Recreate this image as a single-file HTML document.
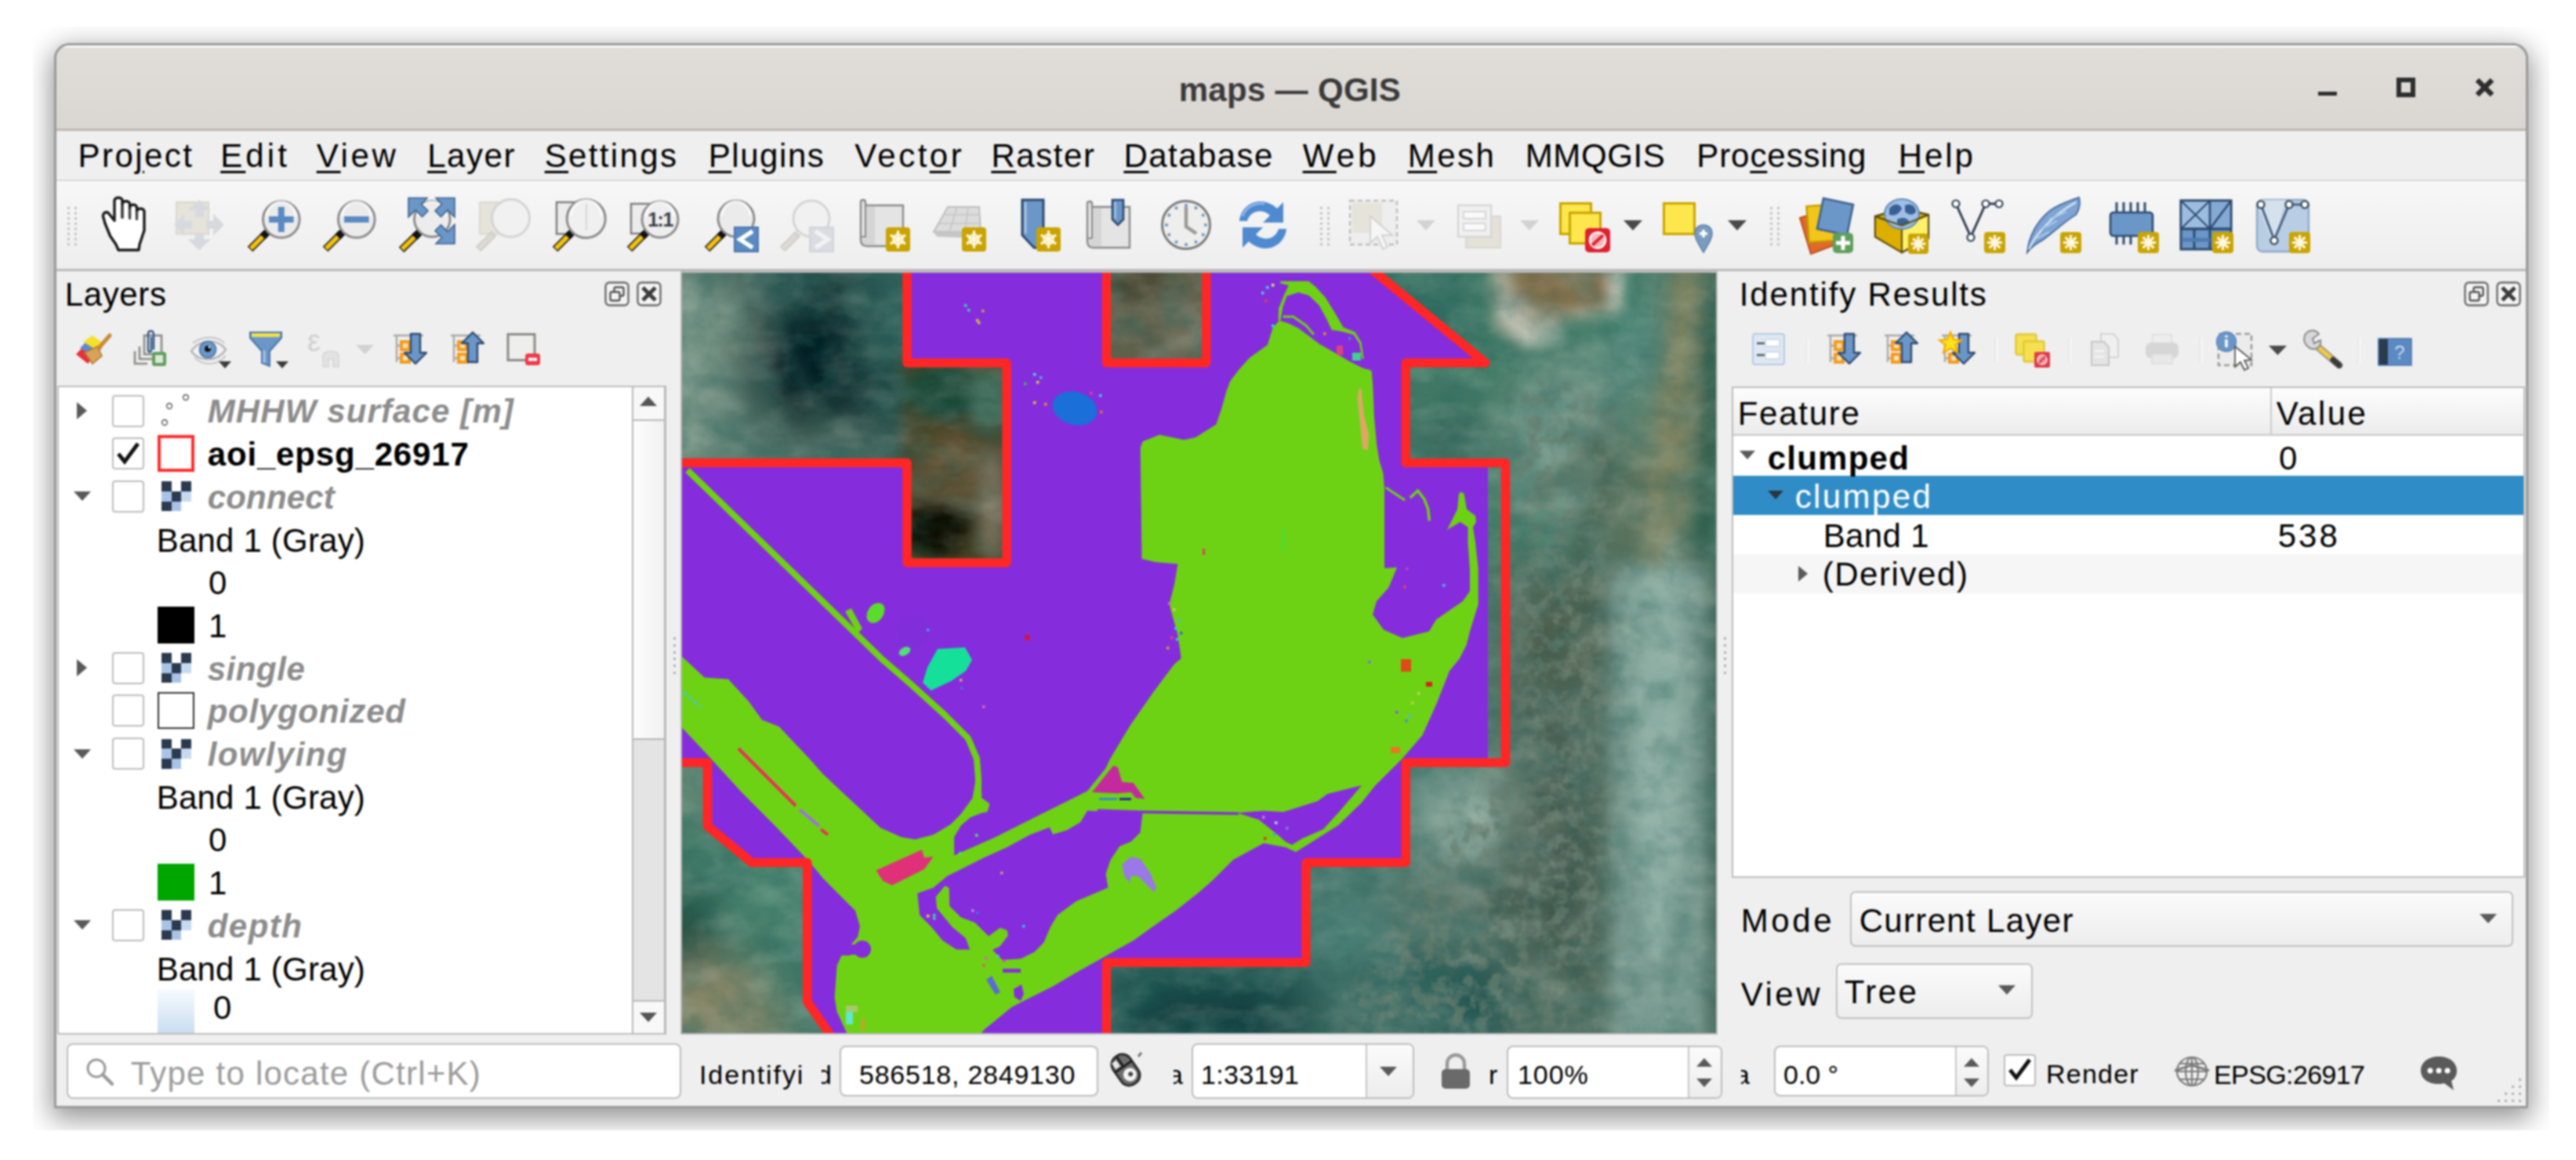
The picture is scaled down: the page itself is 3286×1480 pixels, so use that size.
<!DOCTYPE html>
<html><head><meta charset="utf-8"><title>maps — QGIS</title>
<style>
html,body{margin:0;padding:0;background:#fff;}
body{width:3286px;height:1480px;position:relative;overflow:hidden;font-family:"Liberation Sans",sans-serif;color:#000;}
.a{position:absolute;box-sizing:border-box;}
.t{position:absolute;white-space:pre;line-height:1;}
.t u{text-decoration:underline;text-decoration-thickness:3px;text-underline-offset:5px;}
#clip{position:absolute;left:42px;top:34px;width:3210px;height:1408px;overflow:hidden;background:#fff;}
#shadow{position:absolute;left:27px;top:21px;width:3156px;height:1359px;border-radius:20px 20px 2px 2px;box-shadow:0 10px 34px 4px rgba(0,0,0,.42);background:#999;}
#win{position:absolute;left:69px;top:55px;width:3156px;height:1359px;border-radius:20px 20px 2px 2px;background:#9a9a9a;}
#inner{position:absolute;left:72px;top:58px;width:3150px;height:1353px;border-radius:17px 17px 0 0;background:#efefef;overflow:hidden;}
svg{position:absolute;overflow:visible;}
</style></head><body>
<div id="all" style="position:absolute;left:0;top:0;width:3286px;height:1480px;filter:blur(1px);">
<div id="clip"><div id="shadow"></div></div>
<div id="win"></div>
<div id="inner"></div>

<!-- chrome -->
<div class="a" style="left:72px;top:58px;width:3150px;height:108px;border-radius:17px 17px 0 0;background:linear-gradient(#fff 0,#fff 2px,#e1ddd9 3px,#dad7d3 100%);"></div>
<div class="a" style="left:72px;top:164px;width:3150px;height:3px;background:#beb7b0;"></div>
<span class="t" style="left:1503.7px;top:93.9px;font-size:42px;letter-spacing:0.31px;font-weight:bold;color:#3a3a3a;">maps — QGIS</span>
<div class="a" style="left:2957px;top:117px;width:24px;height:5px;background:#2e2e2e;"></div>
<div class="a" style="left:3057px;top:99px;width:24px;height:25px;border:6px solid #2e2e2e;"></div>
<svg style="left:3157px;top:99px" width="25" height="25" viewBox="0 0 25 25"><path d="M3 3L22 22M22 3L3 22" stroke="#2e2e2e" stroke-width="6.5"/></svg>
<div class="a" style="left:72px;top:167px;width:3150px;height:63px;background:#efefef;"></div>
<div class="a" style="left:72px;top:229px;width:3150px;height:2.5px;background:#d6d6d6;"></div>
<span class="t" style="left:99.5px;top:177.9px;font-size:42px;letter-spacing:2.45px;">Pro<u>j</u>ect</span>
<span class="t" style="left:281.2px;top:177.9px;font-size:42px;letter-spacing:4.11px;"><u>E</u>dit</span>
<span class="t" style="left:403.7px;top:177.9px;font-size:42px;letter-spacing:3.64px;"><u>V</u>iew</span>
<span class="t" style="left:545.2px;top:177.9px;font-size:42px;letter-spacing:1.53px;"><u>L</u>ayer</span>
<span class="t" style="left:694.7px;top:177.9px;font-size:42px;letter-spacing:2.35px;"><u>S</u>ettings</span>
<span class="t" style="left:903.7px;top:177.9px;font-size:42px;letter-spacing:1.57px;"><u>P</u>lugins</span>
<span class="t" style="left:1090.2px;top:177.9px;font-size:42px;letter-spacing:3.47px;">Vect<u>o</u>r</span>
<span class="t" style="left:1264.4px;top:177.9px;font-size:42px;letter-spacing:1.56px;"><u>R</u>aster</span>
<span class="t" style="left:1433.4px;top:177.9px;font-size:42px;letter-spacing:1.46px;"><u>D</u>atabase</span>
<span class="t" style="left:1661.7px;top:177.9px;font-size:42px;letter-spacing:4.15px;"><u>W</u>eb</span>
<span class="t" style="left:1795.7px;top:177.9px;font-size:42px;letter-spacing:2.50px;"><u>M</u>esh</span>
<span class="t" style="left:1945.7px;top:177.9px;font-size:42px;letter-spacing:0.64px;">MMQGIS</span>
<span class="t" style="left:2164.2px;top:177.9px;font-size:42px;letter-spacing:0.94px;">Pro<u>c</u>essing</span>
<span class="t" style="left:2421.7px;top:177.9px;font-size:42px;letter-spacing:2.94px;"><u>H</u>elp</span>
<div class="a" style="left:72px;top:231px;width:3150px;height:114px;background:linear-gradient(#f7f7f7,#eeeeee);"></div>
<div class="a" style="left:72px;top:343px;width:3150px;height:3px;background:#bababa;"></div>
<!-- toolbar -->
<svg style="left:86px;top:264px" width="14" height="56"><rect x="0" y="0.0" width="3" height="3" fill="#c2c2c2"/><rect x="9" y="0.0" width="3" height="3" fill="#c2c2c2"/><rect x="0" y="6.6" width="3" height="3" fill="#c2c2c2"/><rect x="9" y="6.6" width="3" height="3" fill="#c2c2c2"/><rect x="0" y="13.2" width="3" height="3" fill="#c2c2c2"/><rect x="9" y="13.2" width="3" height="3" fill="#c2c2c2"/><rect x="0" y="19.8" width="3" height="3" fill="#c2c2c2"/><rect x="9" y="19.8" width="3" height="3" fill="#c2c2c2"/><rect x="0" y="26.4" width="3" height="3" fill="#c2c2c2"/><rect x="9" y="26.4" width="3" height="3" fill="#c2c2c2"/><rect x="0" y="33.0" width="3" height="3" fill="#c2c2c2"/><rect x="9" y="33.0" width="3" height="3" fill="#c2c2c2"/><rect x="0" y="39.6" width="3" height="3" fill="#c2c2c2"/><rect x="9" y="39.6" width="3" height="3" fill="#c2c2c2"/><rect x="0" y="46.2" width="3" height="3" fill="#c2c2c2"/><rect x="9" y="46.2" width="3" height="3" fill="#c2c2c2"/></svg>
<svg style="left:122.0px;top:252px" width="72" height="72" viewBox="0 0 72 72"><path d="M29 67L26 60L18.5 49L12 33L9.5 24C9 20 13 17.5 16 19.5L24 29.5V4C24 -1 34 -1 34 4V25V8.5C34 3.5 43.5 3.5 43.5 8.5V25V13C43.5 8 52.5 8 52.5 13V26V18C52.5 13 62 13 62 18V42L56 60L55 67Z" fill="#fff" stroke="#1a1a1a" stroke-width="3.4" stroke-linejoin="round"/><path d="M34 10V27M43.5 14V28M52.5 18V29" stroke="#444" stroke-width="3"/></svg>
<svg style="left:217.0px;top:252px" width="72" height="72" viewBox="0 0 72 72"><rect x="8" y="6" width="41" height="40.5" fill="#e6e3da" stroke="#d9d6cd" stroke-width="2"/><g fill="#d6dade"><path d="M37 3L52 16H43V25H31.5V16H22.5Z"/><path d="M69 34.7L55 20.7V29.7H46V39.8H55V48.8Z"/><path d="M37 67.5L22.5 53.3H31.5V46.6H43V53.3H52Z"/><path d="M5 34.7L18 20.7V29.7H28V39.8H18V48.8Z"/></g></svg>
<svg style="left:313.5px;top:252px" width="72" height="72" viewBox="0 0 72 72"><path d="M25 46L5 66" stroke="#3a3320" stroke-width="9.5" stroke-linecap="butt"/><path d="M23 48L6 65" stroke="#f4c20d" stroke-width="5.5"/><path d="M28 43L21 50" stroke="#111" stroke-width="9.5"/><circle cx="44.8" cy="28" r="23.3" fill="#ebebeb" stroke="#8c8c8c" stroke-width="3"/><path d="M26.499999999999996 24A18.3 18.3 0 0 1 63.099999999999994 24" fill="none" stroke="#fff" stroke-width="3" opacity=".8"/><path d="M29 28H60.6M44.8 12V44" stroke="#5b8ac2" stroke-width="8"/></svg>
<svg style="left:410.0px;top:252px" width="72" height="72" viewBox="0 0 72 72"><path d="M25 46L5 66" stroke="#3a3320" stroke-width="9.5" stroke-linecap="butt"/><path d="M23 48L6 65" stroke="#f4c20d" stroke-width="5.5"/><path d="M28 43L21 50" stroke="#111" stroke-width="9.5"/><circle cx="44.8" cy="28" r="23.3" fill="#ebebeb" stroke="#8c8c8c" stroke-width="3"/><path d="M26.499999999999996 24A18.3 18.3 0 0 1 63.099999999999994 24" fill="none" stroke="#fff" stroke-width="3" opacity=".8"/><path d="M29 28H60.6" stroke="#5b8ac2" stroke-width="8"/></svg>
<svg style="left:508.0px;top:252px" width="72" height="72" viewBox="0 0 72 72"><path d="M24.7 46.6L4 66.8" stroke="#3a3320" stroke-width="9.5" stroke-linecap="butt"/><path d="M22.7 48.6L5 65.8" stroke="#f4c20d" stroke-width="5.5"/><path d="M27.7 43.6L20.7 50.6" stroke="#111" stroke-width="9.5"/><circle cx="43.3" cy="27.4" r="22.8" fill="#ececec" stroke="#8c8c8c" stroke-width="3"/><path d="M25.499999999999996 23.4A17.8 17.8 0 0 1 61.099999999999994 23.4" fill="none" stroke="#fff" stroke-width="3" opacity=".8"/><g fill="#6b96c8" stroke="#3f628c" stroke-width="1.6"><path d="M13 0.5H37L29.5 8.5L38 17L30.5 24.5L22 16L13 25Z"/><path d="M72 0.5H48L55.5 8.5L47 17L54.5 24.5L63 16L72 25Z"/><path d="M72 59H48L55.5 51L47 42.5L54.5 35L63 43.5L72 34.5Z"/></g></svg>
<svg style="left:605.0px;top:252px" width="72" height="72" viewBox="0 0 72 72"><rect x="7" y="6" width="38" height="40.5" fill="#e6e3da" stroke="#dad7ce" stroke-width="2"/><path d="M25 46L5 66" stroke="#d0cec8" stroke-width="9.5" stroke-linecap="butt"/><path d="M23 48L6 65" stroke="#dcdad4" stroke-width="5.5"/><circle cx="46.5" cy="26.3" r="24" fill="#f1f1f1" stroke="#d4d4d4" stroke-width="3"/></svg>
<svg style="left:702.5px;top:252px" width="72" height="72" viewBox="0 0 72 72"><rect x="7" y="6" width="38" height="40.5" fill="#ececec" stroke="#7c7c7c" stroke-width="2.4"/><path d="M25 46L5 66" stroke="#3a3320" stroke-width="9.5" stroke-linecap="butt"/><path d="M23 48L6 65" stroke="#f4c20d" stroke-width="5.5"/><path d="M28 43L21 50" stroke="#111" stroke-width="9.5"/><circle cx="44.7" cy="27" r="24.5" fill="#f0f0f0" stroke="#8c8c8c" stroke-width="3"/><path d="M25.200000000000003 23A19.5 19.5 0 0 1 64.2 23" fill="none" stroke="#fff" stroke-width="3" opacity=".8"/><path d="M45 8V42" stroke="#d8d8d8" stroke-width="2"/></svg>
<svg style="left:798.0px;top:252px" width="72" height="72" viewBox="0 0 72 72"><rect x="7" y="8" width="38" height="38" fill="#ececec" stroke="#7c7c7c" stroke-width="2.4"/><path d="M25 46L5 66" stroke="#3a3320" stroke-width="9.5" stroke-linecap="butt"/><path d="M23 48L6 65" stroke="#f4c20d" stroke-width="5.5"/><path d="M28 43L21 50" stroke="#111" stroke-width="9.5"/><circle cx="44" cy="28" r="23" fill="#eeeeee" stroke="#8c8c8c" stroke-width="3"/><path d="M26 24A18 18 0 0 1 62 24" fill="none" stroke="#fff" stroke-width="3" opacity=".8"/><text x="44" y="37" font-family="Liberation Sans,sans-serif" font-weight="bold" font-size="25" text-anchor="middle" fill="#3a4148" letter-spacing="-1.5">1:1</text></svg>
<svg style="left:896.5px;top:252px" width="72" height="72" viewBox="0 0 72 72"><path d="M25 46L5 66" stroke="#3a3320" stroke-width="9.5" stroke-linecap="butt"/><path d="M23 48L6 65" stroke="#f4c20d" stroke-width="5.5"/><path d="M28 43L21 50" stroke="#111" stroke-width="9.5"/><circle cx="42" cy="27" r="23" fill="#ebebeb" stroke="#8c8c8c" stroke-width="3"/><path d="M24 23A18 18 0 0 1 60 23" fill="none" stroke="#fff" stroke-width="3" opacity=".8"/><rect x="40" y="38" width="30" height="31" fill="#5b8ac2" stroke="#4a76aa" stroke-width="2"/><path d="M63 43L47 53.5L63 64" stroke="#fff" stroke-width="5.5" fill="none"/></svg>
<svg style="left:993.0px;top:252px" width="72" height="72" viewBox="0 0 72 72"><path d="M25 46L5 66" stroke="#d0cec8" stroke-width="9.5" stroke-linecap="butt"/><path d="M23 48L6 65" stroke="#dcdad4" stroke-width="5.5"/><circle cx="42" cy="27" r="23" fill="#f1f1f1" stroke="#d4d4d4" stroke-width="3"/><rect x="40" y="38" width="30" height="31" fill="#d9dde1" stroke="#d0d4d8" stroke-width="2"/><path d="M47 43L63 53.5L47 64" stroke="#f2f2f2" stroke-width="5.5" fill="none"/></svg>
<svg style="left:1092.0px;top:252px" width="72" height="72" viewBox="0 0 72 72"><path d="M6 6C6 2 12 2 12 6V10H60V62H14C8 62 6 58 6 54Z" fill="#e4e4e4" stroke="#8a8a8a" stroke-width="2.4"/><path d="M12 10V50H6" fill="none" stroke="#8a8a8a" stroke-width="2"/><path d="M13 11H24V61H14C9 61 8 57 8 52H13Z" fill="#cfcfcf" opacity=".7"/><rect x="38" y="38" width="31" height="31" rx="4" fill="#c9a400"/><path d="M53.5 53.5L53.5 64.7M53.5 53.5L43.8 59.1M53.5 53.5L43.8 47.9M53.5 53.5L53.5 42.3M53.5 53.5L63.2 47.9M53.5 53.5L63.2 59.1" stroke="#fff8e0" stroke-width="3.2" fill="none"/><circle cx="53.5" cy="53.5" r="6.2" fill="none" stroke="#fff8e0" stroke-width="2.4"/></svg>
<svg style="left:1188.5px;top:252px" width="72" height="72" viewBox="0 0 72 72"><path d="M20 12L60 12L62 44L2 44Z" fill="#dcdcdc" stroke="#bdbdbd" stroke-width="2"/><path d="M14 22H61M8 33H62M32 12L22 44M46 12L42 44" stroke="#c4c4c4" stroke-width="1.6"/><path d="M2 44L62 44L58 52L6 50Z" fill="#c6c6c6"/><rect x="38" y="38" width="31" height="31" rx="4" fill="#c9a400"/><path d="M53.5 53.5L53.5 64.7M53.5 53.5L43.8 59.1M53.5 53.5L43.8 47.9M53.5 53.5L53.5 42.3M53.5 53.5L63.2 47.9M53.5 53.5L63.2 59.1" stroke="#fff8e0" stroke-width="3.2" fill="none"/><circle cx="53.5" cy="53.5" r="6.2" fill="none" stroke="#fff8e0" stroke-width="2.4"/></svg>
<svg style="left:1293.0px;top:252px" width="72" height="72" viewBox="0 0 72 72"><path d="M11 3H38V64H26L11 48Z" fill="#6b96c8" stroke="#2d4a6e" stroke-width="3"/><path d="M15 6V46" stroke="#a9c6e6" stroke-width="3"/><rect x="29" y="38" width="31" height="31" rx="4" fill="#c9a400"/><path d="M44.5 53.5L44.5 64.7M44.5 53.5L34.8 59.1M44.5 53.5L34.8 47.9M44.5 53.5L44.5 42.3M44.5 53.5L54.2 47.9M44.5 53.5L54.2 59.1" stroke="#fff8e0" stroke-width="3.2" fill="none"/><circle cx="44.5" cy="53.5" r="6.2" fill="none" stroke="#fff8e0" stroke-width="2.4"/></svg>
<svg style="left:1381.0px;top:252px" width="72" height="72" viewBox="0 0 72 72"><g transform="translate(0,2)"><path d="M6 6C6 2 12 2 12 6V10H60V62H14C8 62 6 58 6 54Z" fill="#e4e4e4" stroke="#8a8a8a" stroke-width="2.4"/><path d="M12 10V50H6" fill="none" stroke="#8a8a8a" stroke-width="2"/><path d="M13 11H24V61H14C9 61 8 57 8 52H13Z" fill="#cfcfcf" opacity=".7"/></g><path d="M38 3H52V28L45 35L38 28Z" fill="#6b96c8" stroke="#2d4a6e" stroke-width="2.6"/><path d="M41.5 6V27" stroke="#a9c6e6" stroke-width="2.4"/></svg>
<svg style="left:1477.0px;top:252px" width="72" height="72" viewBox="0 0 72 72"><circle cx="36" cy="35" r="30.5" fill="#eeeeec" stroke="#7a7a7a" stroke-width="3"/><rect x="59.2" y="33.2" width="3.6" height="3.6" fill="#6b96c8"/><rect x="55.9" y="45.7" width="3.6" height="3.6" fill="#6b96c8"/><rect x="46.7" y="54.9" width="3.6" height="3.6" fill="#6b96c8"/><rect x="34.2" y="58.2" width="3.6" height="3.6" fill="#6b96c8"/><rect x="21.7" y="54.9" width="3.6" height="3.6" fill="#6b96c8"/><rect x="12.5" y="45.7" width="3.6" height="3.6" fill="#6b96c8"/><rect x="9.2" y="33.2" width="3.6" height="3.6" fill="#6b96c8"/><rect x="12.5" y="20.7" width="3.6" height="3.6" fill="#6b96c8"/><rect x="21.7" y="11.5" width="3.6" height="3.6" fill="#6b96c8"/><rect x="34.2" y="8.2" width="3.6" height="3.6" fill="#6b96c8"/><rect x="46.7" y="11.5" width="3.6" height="3.6" fill="#6b96c8"/><rect x="55.9" y="20.7" width="3.6" height="3.6" fill="#6b96c8"/><path d="M36 12V37L49 46" stroke="#9a9a9a" stroke-width="4.5" fill="none"/></svg>
<svg style="left:1574.5px;top:252px" width="72" height="72" viewBox="0 0 72 72"><g fill="#4f8ad0"><path d="M6 30C8 12 24 2 40 6C46 8 50 10 54 14L62 6V32H36L45 23C36 14 20 16 16 30Z"/><path d="M66 40C64 58 48 68 32 64C26 62 22 60 18 56L10 64V38H36L27 47C36 56 52 54 56 40Z"/></g><path d="M10 24C14 12 26 6 38 8" stroke="#8fb6e6" stroke-width="3" fill="none"/></svg>
<svg style="left:1684px;top:264px" width="14" height="56"><rect x="0" y="0.0" width="3" height="3" fill="#c2c2c2"/><rect x="9" y="0.0" width="3" height="3" fill="#c2c2c2"/><rect x="0" y="6.6" width="3" height="3" fill="#c2c2c2"/><rect x="9" y="6.6" width="3" height="3" fill="#c2c2c2"/><rect x="0" y="13.2" width="3" height="3" fill="#c2c2c2"/><rect x="9" y="13.2" width="3" height="3" fill="#c2c2c2"/><rect x="0" y="19.8" width="3" height="3" fill="#c2c2c2"/><rect x="9" y="19.8" width="3" height="3" fill="#c2c2c2"/><rect x="0" y="26.4" width="3" height="3" fill="#c2c2c2"/><rect x="9" y="26.4" width="3" height="3" fill="#c2c2c2"/><rect x="0" y="33.0" width="3" height="3" fill="#c2c2c2"/><rect x="9" y="33.0" width="3" height="3" fill="#c2c2c2"/><rect x="0" y="39.6" width="3" height="3" fill="#c2c2c2"/><rect x="9" y="39.6" width="3" height="3" fill="#c2c2c2"/><rect x="0" y="46.2" width="3" height="3" fill="#c2c2c2"/><rect x="9" y="46.2" width="3" height="3" fill="#c2c2c2"/></svg>
<svg style="left:1718.0px;top:252px" width="72" height="72" viewBox="0 0 72 72"><rect x="4" y="4" width="60" height="56" fill="#eeeeee" stroke="#bdbdbd" stroke-width="2.4" stroke-dasharray="6 4"/><rect x="7" y="7" width="38" height="38" fill="#e6e3da"/><path d="M30 24L30 58L39 50L46 66L52 63L45 48L58 48Z" fill="#f6f6f6" stroke="#d2d2d2" stroke-width="2"/></svg>
<svg style="left:1807px;top:281px" width="24" height="13" viewBox="0 0 24 13"><path d="M0 0H24L12 13Z" fill="#d2d2d2"/></svg>
<svg style="left:1851.0px;top:252px" width="72" height="72" viewBox="0 0 72 72"><rect x="19" y="24" width="44" height="40" fill="#e3e1d8" stroke="#d8d6ce" stroke-width="2"/><rect x="9" y="10" width="42" height="40" fill="#f0f0f0" stroke="#d6d6d6" stroke-width="2.4"/><rect x="16" y="18" width="28" height="9" fill="#fafafa" stroke="#d6d6d6" stroke-width="2"/><rect x="16" y="33" width="28" height="9" fill="#fafafa" stroke="#d6d6d6" stroke-width="2"/></svg>
<svg style="left:1938.5px;top:281px" width="24" height="13" viewBox="0 0 24 13"><path d="M0 0H24L12 13Z" fill="#d2d2d2"/></svg>
<svg style="left:1985.5px;top:252px" width="72" height="72" viewBox="0 0 72 72"><rect x="4.5" y="7.5" width="39" height="39" fill="#fde74c" stroke="#c9a400" stroke-width="3"/><rect x="16.5" y="19.5" width="39" height="39" fill="#fde74c" stroke="#c9a400" stroke-width="3"/><rect x="36" y="39" width="32" height="31" rx="5" fill="#e02030"/><circle cx="52" cy="54.5" r="10" fill="#f6b8b8" stroke="#fff" stroke-width="2.4"/><path d="M45 61L59 48" stroke="#e02030" stroke-width="4"/></svg>
<svg style="left:2071px;top:281px" width="24" height="13" viewBox="0 0 24 13"><path d="M0 0H24L12 13Z" fill="#4a4a4a"/></svg>
<svg style="left:2116.0px;top:252px" width="72" height="72" viewBox="0 0 72 72"><rect x="6.5" y="7.5" width="39" height="39" fill="#fde74c" stroke="#c9a400" stroke-width="3"/><path d="M57 70C50 58 46 52 46 46C46 39 51 35 57 35C63 35 68 39 68 46C68 52 64 58 57 70Z" fill="#7a9cc0" stroke="#5f82a6" stroke-width="1.6"/><path d="M52 46H62M57 41V51" stroke="#fff" stroke-width="3.4"/></svg>
<svg style="left:2203.5px;top:281px" width="24" height="13" viewBox="0 0 24 13"><path d="M0 0H24L12 13Z" fill="#4a4a4a"/></svg>
<svg style="left:2258px;top:264px" width="14" height="56"><rect x="0" y="0.0" width="3" height="3" fill="#c2c2c2"/><rect x="9" y="0.0" width="3" height="3" fill="#c2c2c2"/><rect x="0" y="6.6" width="3" height="3" fill="#c2c2c2"/><rect x="9" y="6.6" width="3" height="3" fill="#c2c2c2"/><rect x="0" y="13.2" width="3" height="3" fill="#c2c2c2"/><rect x="9" y="13.2" width="3" height="3" fill="#c2c2c2"/><rect x="0" y="19.8" width="3" height="3" fill="#c2c2c2"/><rect x="9" y="19.8" width="3" height="3" fill="#c2c2c2"/><rect x="0" y="26.4" width="3" height="3" fill="#c2c2c2"/><rect x="9" y="26.4" width="3" height="3" fill="#c2c2c2"/><rect x="0" y="33.0" width="3" height="3" fill="#c2c2c2"/><rect x="9" y="33.0" width="3" height="3" fill="#c2c2c2"/><rect x="0" y="39.6" width="3" height="3" fill="#c2c2c2"/><rect x="9" y="39.6" width="3" height="3" fill="#c2c2c2"/><rect x="0" y="46.2" width="3" height="3" fill="#c2c2c2"/><rect x="9" y="46.2" width="3" height="3" fill="#c2c2c2"/></svg>
<svg style="left:2293.5px;top:252px" width="72" height="72" viewBox="0 0 72 72"><path d="M2 26L34 16L48 60L16 72Z" fill="#e0692a" stroke="#b8501c" stroke-width="2"/><path d="M12 10H46V56H12Z" fill="#f2c618" stroke="#c49a00" stroke-width="2.4" transform="rotate(-4 29 33)"/><path d="M32 1L70 9L62 48L24 40Z" fill="#6b96c8" stroke="#3f628c" stroke-width="2.6"/><rect x="44" y="45" width="26" height="26" rx="5" fill="#5f9e5c"/><path d="M48 58H66M57 49V67" stroke="#fff" stroke-width="5"/></svg>
<svg style="left:2390.0px;top:252px" width="72" height="72" viewBox="0 0 72 72"><path d="M2 24L36 14L70 22V52L36 70L2 50Z" fill="#d9b000" stroke="#5a4a10" stroke-width="2.4"/><path d="M36 36L70 22V52L36 70Z" fill="#fdf16a" stroke="#5a4a10" stroke-width="2"/><path d="M2 24L36 36V70L2 50Z" fill="#dcae00" stroke="#5a4a10" stroke-width="2"/><ellipse cx="36" cy="21" rx="22" ry="19" fill="#9fc0e6" stroke="#5f86b4" stroke-width="2"/><path d="M20 14C26 6 34 8 36 14C32 22 26 24 20 22ZM40 10C48 6 54 12 54 18C50 24 44 22 40 18ZM30 28C36 24 44 26 46 32C40 36 34 36 30 32Z" fill="#3a5f94"/><path d="M2 24L36 36L70 22" fill="none" stroke="#5a4a10" stroke-width="2"/><rect x="44" y="46" width="26" height="26" rx="4" fill="#c9a400"/><path d="M57.0 59.0L66.4 59.0M57.0 59.0L63.6 65.6M57.0 59.0L57.0 68.4M57.0 59.0L50.4 65.6M57.0 59.0L47.6 59.0M57.0 59.0L50.4 52.4M57.0 59.0L57.0 49.6M57.0 59.0L63.6 52.4" stroke="#fff8e0" stroke-width="3.2" fill="none"/></svg>
<svg style="left:2487.0px;top:252px" width="72" height="72" viewBox="0 0 72 72"><path d="M8 8L27 50L46 8L62 8" fill="none" stroke="#2f3f50" stroke-width="3"/><circle cx="8" cy="8" r="4.5" fill="#fff" stroke="#2f3f50" stroke-width="2.2"/><circle cx="27" cy="51" r="4.5" fill="#fff" stroke="#2f3f50" stroke-width="2.2"/><circle cx="46" cy="8" r="4.5" fill="#fff" stroke="#2f3f50" stroke-width="2.2"/><circle cx="63" cy="8" r="4.5" fill="#fff" stroke="#2f3f50" stroke-width="2.2"/><rect x="44" y="44" width="27" height="27" rx="4" fill="#c9a400"/><path d="M57.5 57.5L67.2 57.5M57.5 57.5L64.4 64.4M57.5 57.5L57.5 67.2M57.5 57.5L50.6 64.4M57.5 57.5L47.8 57.5M57.5 57.5L50.6 50.6M57.5 57.5L57.5 47.8M57.5 57.5L64.4 50.6" stroke="#fff8e0" stroke-width="3.2" fill="none"/></svg>
<svg style="left:2584.0px;top:252px" width="72" height="72" viewBox="0 0 72 72"><path d="M2 70C4 50 14 30 32 16C44 8 56 4 68 0C70 8 68 16 64 22C50 30 36 44 22 54C14 58 8 62 2 70Z" fill="#7fa4d4" stroke="#4a6f9e" stroke-width="2"/><path d="M4 66C14 44 36 22 64 6" stroke="#d8e6f6" stroke-width="2.4" fill="none"/><path d="M20 40L40 30M30 28L52 18M14 52L30 44" stroke="#a9c6e6" stroke-width="2.4"/><rect x="44" y="44" width="27" height="27" rx="4" fill="#c9a400"/><path d="M57.5 57.5L67.2 57.5M57.5 57.5L64.4 64.4M57.5 57.5L57.5 67.2M57.5 57.5L50.6 64.4M57.5 57.5L47.8 57.5M57.5 57.5L50.6 50.6M57.5 57.5L57.5 47.8M57.5 57.5L64.4 50.6" stroke="#fff8e0" stroke-width="3.2" fill="none"/></svg>
<svg style="left:2685.5px;top:252px" width="72" height="72" viewBox="0 0 72 72"><path d="M14 6V20" stroke="#2d4a6e" stroke-width="3"/><path d="M23 6V20" stroke="#2d4a6e" stroke-width="3"/><path d="M32 6V20" stroke="#2d4a6e" stroke-width="3"/><path d="M41 6V20" stroke="#2d4a6e" stroke-width="3"/><path d="M50 6V20" stroke="#2d4a6e" stroke-width="3"/><path d="M14 46V60" stroke="#2d4a6e" stroke-width="3"/><path d="M23 46V60" stroke="#2d4a6e" stroke-width="3"/><path d="M32 46V60" stroke="#2d4a6e" stroke-width="3"/><rect x="6" y="19" width="54" height="30" rx="4" fill="#6b96c8" stroke="#2d4a6e" stroke-width="2.6"/><rect x="41" y="44" width="27" height="27" rx="4" fill="#c9a400"/><path d="M54.5 57.5L64.2 57.5M54.5 57.5L61.4 64.4M54.5 57.5L54.5 67.2M54.5 57.5L47.6 64.4M54.5 57.5L44.8 57.5M54.5 57.5L47.6 50.6M54.5 57.5L54.5 47.8M54.5 57.5L61.4 50.6" stroke="#fff8e0" stroke-width="3.2" fill="none"/></svg>
<svg style="left:2779.0px;top:252px" width="72" height="72" viewBox="0 0 72 72"><rect x="3" y="4" width="64" height="62" fill="#6b96c8" stroke="#2d4a6e" stroke-width="3"/><path d="M3 4H40V40H3Z" fill="#9dbde0" stroke="#2d4a6e" stroke-width="2.4"/><path d="M3 4L40 40M40 4L3 40" stroke="#2d4a6e" stroke-width="2"/><path d="M40 4H67V40H40ZM67 4L40 40" fill="#84a9d4" stroke="#2d4a6e" stroke-width="2.4"/><path d="M20 40V66M40 40V66M3 40H67" stroke="#2d4a6e" stroke-width="3"/><path d="M4 54H40" stroke="#4f7cb0" stroke-width="5"/><rect x="43" y="44" width="27" height="27" rx="4" fill="#c9a400"/><path d="M56.5 57.5L66.2 57.5M56.5 57.5L63.4 64.4M56.5 57.5L56.5 67.2M56.5 57.5L49.6 64.4M56.5 57.5L46.8 57.5M56.5 57.5L49.6 50.6M56.5 57.5L56.5 47.8M56.5 57.5L63.4 50.6" stroke="#fff8e0" stroke-width="3.2" fill="none"/></svg>
<svg style="left:2876.0px;top:252px" width="72" height="72" viewBox="0 0 72 72"><rect x="3" y="3" width="66" height="66" rx="7" fill="#b9cde4" stroke="#8fa9c8" stroke-width="2.4"/><path d="M3 10C3 6 6 3 10 3H40L24 60L6 14Z" fill="#dde6f0" opacity=".8"/><path d="M8 9L25 54L44 9L64 9" fill="none" stroke="#4a6482" stroke-width="3"/><circle cx="8" cy="9" r="4.5" fill="#fff" stroke="#2f3f50" stroke-width="2.2"/><circle cx="25" cy="55" r="4.5" fill="#fff" stroke="#2f3f50" stroke-width="2.2"/><circle cx="44" cy="9" r="4.5" fill="#fff" stroke="#2f3f50" stroke-width="2.2"/><circle cx="64" cy="9" r="4.5" fill="#fff" stroke="#2f3f50" stroke-width="2.2"/><rect x="44" y="44" width="27" height="27" rx="4" fill="#c9a400"/><path d="M57.5 57.5L67.2 57.5M57.5 57.5L64.4 64.4M57.5 57.5L57.5 67.2M57.5 57.5L50.6 64.4M57.5 57.5L47.8 57.5M57.5 57.5L50.6 50.6M57.5 57.5L57.5 47.8M57.5 57.5L64.4 50.6" stroke="#fff8e0" stroke-width="3.2" fill="none"/></svg>
<!-- smallbars -->
<svg style="left:96px;top:424px" width="48" height="44" viewBox="0 0 48 44"><path d="M1 28L20 8L34 20L16 40Z" fill="#e8303a"/><path d="M6 20L20 6L34 18L22 30Z" fill="#5b8ad0"/><path d="M10 12L22 4L36 14L26 22Z" fill="#f6e02a"/><path d="M12 26L28 18L34 30L22 40Z" fill="#d9a25a" stroke="#b07a30" stroke-width="1.6"/><path d="M30 20L44 4" stroke="#c98a3a" stroke-width="5" stroke-linecap="round"/></svg>
<svg style="left:170px;top:420px" width="46" height="50" viewBox="0 0 46 50"><path d="M2 28V44H18" fill="none" stroke="#8a8a86" stroke-width="2.6"/><path d="M8 22V38H24" fill="none" stroke="#8a8a86" stroke-width="2.6"/><rect x="14" y="8" width="22" height="24" fill="none" stroke="#8a8a86" stroke-width="2.6"/><path d="M26 26V6C26 1 19 1 19 6V26C19 30 23 30 23 26V10" fill="none" stroke="#3f5f8a" stroke-width="2.6"/><rect x="24" y="29" width="18" height="18" rx="3" fill="#5f9e5c"/><rect x="28" y="33" width="10" height="10" fill="#d8ead6"/></svg>
<svg style="left:242px;top:428px" width="54" height="44" viewBox="0 0 54 44"><path d="M2 20C12 6 34 2 46 18C36 34 12 34 2 20Z" fill="#f2f2f2" stroke="#b4b4b4" stroke-width="2.4"/><path d="M4 10C16 0 36 0 44 10" fill="none" stroke="#c4c4c4" stroke-width="2"/><path d="M6 28C18 40 36 38 46 26" fill="none" stroke="#c8c8c8" stroke-width="2"/><circle cx="23" cy="18" r="10.5" fill="#6b96c8" stroke="#4a76aa" stroke-width="1.6"/><circle cx="23" cy="17" r="4" fill="#111"/><circle cx="25" cy="15" r="1.4" fill="#fff"/></svg><svg style="left:279px;top:461px" width="16" height="9" viewBox="0 0 16 9"><path d="M0 0H16L8 9Z" fill="#3c3c3c"/></svg>
<svg style="left:318px;top:421px" width="50" height="50" viewBox="0 0 50 50"><path d="M1 3H41V10L26 27V46L16 42V27L1 10Z" fill="#6b96c8" stroke="#4a76aa" stroke-width="2"/><rect x="3" y="4" width="36" height="5" fill="#f0e04a"/><path d="M19 26V42" stroke="#a9c6e6" stroke-width="3"/></svg><svg style="left:352px;top:461px" width="16" height="9" viewBox="0 0 16 9"><path d="M0 0H16L8 9Z" fill="#3c3c3c"/></svg>
<svg style="left:392px;top:422px" width="46" height="50" viewBox="0 0 46 50"><text x="0" y="26" font-family="Liberation Sans,sans-serif" font-size="38" fill="#d0d0d0">ε</text><path d="M20 46V32C20 24 40 24 40 32V46H33V36H27V46Z" fill="#e2e2e2" stroke="#d6d6d6" stroke-width="1.6"/></svg>
<svg style="left:453.5px;top:440px" width="23" height="12" viewBox="0 0 23 12"><path d="M0 0H23L11.5 12Z" fill="#d2d2d2"/></svg>
<svg style="left:500px;top:424px" width="46" height="42" viewBox="0 0 46 42"><path d="M2 4H40" stroke="#a8a8a8" stroke-width="2.4"/><path d="M6 4V38M6 17H14M6 33H14" stroke="#a8a8a8" stroke-width="2.4" fill="none"/><rect x="12" y="12" width="10" height="10" fill="#ffe2b0" stroke="#f59a1c" stroke-width="4"/><rect x="12" y="28" width="10" height="10" fill="#ffe2b0" stroke="#f59a1c" stroke-width="4"/><path d="M30 40L44 26H36V2H24V26H16Z" fill="#6b96c8" stroke="#2d4a6e" stroke-width="2.4" stroke-linejoin="round"/></svg>
<svg style="left:573px;top:424px" width="46" height="42" viewBox="0 0 46 42"><path d="M2 4H40" stroke="#a8a8a8" stroke-width="2.4"/><path d="M6 4V38M6 17H14M6 33H14" stroke="#a8a8a8" stroke-width="2.4" fill="none"/><rect x="12" y="12" width="10" height="10" fill="#ffe2b0" stroke="#f59a1c" stroke-width="4"/><rect x="12" y="28" width="10" height="10" fill="#ffe2b0" stroke="#f59a1c" stroke-width="4"/><path d="M30 0L44 14H36V38H24V14H16Z" fill="#6b96c8" stroke="#2d4a6e" stroke-width="2.4" stroke-linejoin="round"/></svg>
<svg style="left:646px;top:424px" width="46" height="44" viewBox="0 0 46 44"><rect x="2" y="2.5" width="34" height="33" fill="#eeeeec" stroke="#8a8a86" stroke-width="3"/><rect x="24" y="27" width="19" height="15" rx="3.5" fill="#ee3a4a"/><path d="M28 34.5H39" stroke="#fff" stroke-width="4"/></svg>
<svg style="left:2235px;top:425px" width="42" height="41" viewBox="0 0 42 41"><rect x="1" y="1" width="40" height="39" rx="3" fill="#dfe8f2" stroke="#b3cbe6" stroke-width="2"/><path d="M6 13H16M6 28H16" stroke="#4a5868" stroke-width="2.6"/><rect x="17" y="8" width="18" height="9" rx="2" fill="#fff" stroke="#c3d3e6" stroke-width="1.4"/><rect x="17" y="24" width="18" height="9" rx="2" fill="#fff" stroke="#c3d3e6" stroke-width="1.4"/></svg>
<div class="a" style="left:2303.9px;top:431px;width:3px;height:32px;background:#fafafa;border-left:1px solid #dcdcdc;"></div>
<svg style="left:2329px;top:424px" width="46" height="42" viewBox="0 0 46 42"><path d="M2 4H40" stroke="#a8a8a8" stroke-width="2.4"/><path d="M6 4V38M6 17H14M6 33H14" stroke="#a8a8a8" stroke-width="2.4" fill="none"/><rect x="12" y="12" width="10" height="10" fill="#ffe2b0" stroke="#f59a1c" stroke-width="4"/><rect x="12" y="28" width="10" height="10" fill="#ffe2b0" stroke="#f59a1c" stroke-width="4"/><path d="M30 40L44 26H36V2H24V26H16Z" fill="#6b96c8" stroke="#2d4a6e" stroke-width="2.4" stroke-linejoin="round"/></svg>
<svg style="left:2402px;top:424px" width="46" height="42" viewBox="0 0 46 42"><path d="M2 4H40" stroke="#a8a8a8" stroke-width="2.4"/><path d="M6 4V38M6 17H14M6 33H14" stroke="#a8a8a8" stroke-width="2.4" fill="none"/><rect x="12" y="12" width="10" height="10" fill="#ffe2b0" stroke="#f59a1c" stroke-width="4"/><rect x="12" y="28" width="10" height="10" fill="#ffe2b0" stroke="#f59a1c" stroke-width="4"/><path d="M30 0L44 14H36V38H24V14H16Z" fill="#6b96c8" stroke="#2d4a6e" stroke-width="2.4" stroke-linejoin="round"/></svg>
<svg style="left:2475px;top:424px" width="46" height="42" viewBox="0 0 46 42"><path d="M2 4H40" stroke="#a8a8a8" stroke-width="2.4"/><path d="M6 4V38M6 17H14M6 33H14" stroke="#a8a8a8" stroke-width="2.4" fill="none"/><rect x="12" y="28" width="10" height="10" fill="#ffe2b0" stroke="#f59a1c" stroke-width="4"/><path d="M30 40L44 26H36V2H24V26H16Z" fill="#6b96c8" stroke="#2d4a6e" stroke-width="2.4" stroke-linejoin="round"/><path d="M13 0L17 9L27 10L19.5 16L22 26L13 20.5L4 26L6.5 16L-1 10L9 9Z" fill="#ffe21a" stroke="#f5a800" stroke-width="2.2"/></svg>
<div class="a" style="left:2544.8px;top:431px;width:3px;height:32px;background:#fafafa;border-left:1px solid #dcdcdc;"></div>
<svg style="left:2569px;top:424px" width="48" height="46" viewBox="0 0 48 46"><rect x="2.5" y="2.5" width="26" height="26" rx="2" fill="#f5e050" stroke="#e0c83a" stroke-width="2.4"/><rect x="12.5" y="11.5" width="26" height="26" rx="2" fill="#f5e050" stroke="#e0c83a" stroke-width="2.4"/><rect x="26" y="25" width="20" height="20" rx="2" fill="#e03a48"/><circle cx="36" cy="35" r="6" fill="#f0a0a6" stroke="#fbe0e0" stroke-width="1.6"/><path d="M32 39L40 31" stroke="#e03a48" stroke-width="2.6"/></svg>
<div class="a" style="left:2638.5px;top:431px;width:3px;height:32px;background:#fafafa;border-left:1px solid #dcdcdc;"></div>
<svg style="left:2666px;top:424px" width="38" height="44" viewBox="0 0 38 44"><path d="M14 2H30L36 9V32H14Z" fill="#efefef" stroke="#d4d4d4" stroke-width="2"/><path d="M2 12H18L24 19V42H2Z" fill="#e4e4e4" stroke="#c6c6c6" stroke-width="2"/><path d="M6 24H18M6 31H18" stroke="#f4f4f4" stroke-width="2.4"/></svg>
<svg style="left:2736px;top:426px" width="44" height="40" viewBox="0 0 44 40"><rect x="10" y="1" width="24" height="12" fill="#ededed" stroke="#dcdcdc" stroke-width="1.6"/><rect x="1" y="11" width="42" height="20" rx="7" fill="#d6d6d6"/><rect x="9" y="26" width="26" height="12" fill="#e8e8e8" stroke="#dcdcdc" stroke-width="1.6"/></svg>
<div class="a" style="left:2805.5px;top:431px;width:3px;height:32px;background:#fafafa;border-left:1px solid #dcdcdc;"></div>
<svg style="left:2827px;top:422px" width="50" height="50" viewBox="0 0 50 50"><rect x="3" y="4" width="42" height="40" fill="#ececec" stroke="#9a9a9a" stroke-width="2.6" stroke-dasharray="7 4"/><circle cx="13" cy="14" r="12.5" fill="#6b96c8" stroke="#5b86ba" stroke-width="1.4"/><path d="M13 11V21M13 6V8.5" stroke="#fff" stroke-width="3.4"/><path d="M24 20L24 46L31 40L36 50L41 47.5L36 38L45 37Z" fill="#fff" stroke="#555" stroke-width="1.8"/></svg>
<svg style="left:2894.0px;top:440.7px" width="23" height="12" viewBox="0 0 23 12"><path d="M0 0H23L11.5 12Z" fill="#4a4a4a"/></svg>
<svg style="left:2936px;top:420px" width="56" height="52" viewBox="0 0 56 52"><path d="M20 22L48 46" stroke="#8a8a8a" stroke-width="9" stroke-linecap="round"/><path d="M20 22L46 44" stroke="#eec84a" stroke-width="6" stroke-linecap="round"/><path d="M40 39L48 46" stroke="#3a3a3a" stroke-width="7" stroke-linecap="round"/><path d="M4 8C8 0 18 0 22 6L14 12L16 18L24 14C26 22 18 28 10 24C4 20 2 14 4 8Z" fill="#d8d8d8" stroke="#8a8a8a" stroke-width="2"/></svg>
<div class="a" style="left:3007.5px;top:431px;width:3px;height:32px;background:#fafafa;border-left:1px solid #dcdcdc;"></div>
<svg style="left:3034px;top:432px" width="42" height="34" viewBox="0 0 42 34"><rect x="0" y="0" width="42" height="34" fill="#5b8ac2"/><rect x="0" y="0" width="12" height="34" fill="#2b3a4e"/><path d="M0 0H42V34H0Z" fill="none" stroke="#4a76aa" stroke-width="1.6"/><text x="27" y="26" font-family="Liberation Sans,sans-serif" font-size="24" text-anchor="middle" fill="#c8daf0">?</text></svg>
<!-- layers -->
<span class="t" style="left:82.7px;top:354.6px;font-size:42px;letter-spacing:0.63px;">Layers</span>
<svg style="left:771px;top:358.5px" width="32" height="32" viewBox="0 0 32 32"><rect x="1.5" y="1.5" width="29" height="29" rx="5" fill="#f4f4f4" stroke="#6a6a6a" stroke-width="2.4"/><rect x="12.5" y="7.5" width="12" height="11" rx="2" fill="none" stroke="#555" stroke-width="2.4"/><rect x="7.5" y="13.5" width="12" height="11" rx="2" fill="#f4f4f4" stroke="#555" stroke-width="2.4"/></svg><svg style="left:812px;top:358.5px" width="32" height="32" viewBox="0 0 32 32"><rect x="1.5" y="1.5" width="29" height="29" rx="5" fill="#f4f4f4" stroke="#6a6a6a" stroke-width="2.4"/><path d="M8 8L24 24M24 8L8 24" stroke="#3c3c3c" stroke-width="5"/></svg>
<div class="a" style="left:73px;top:492px;width:777px;height:828px;background:#fff;border:2px solid #bcbcbc;"></div>
<div class="a" style="left:806px;top:494px;width:43px;height:824px;background:#e4e4e4;border-left:2px solid #b8b8b8;border-right:2px solid #b8b8b8;"></div>
<div class="a" style="left:808px;top:494px;width:39px;height:43px;background:#f8f8f8;border-bottom:2px solid #b8b8b8;"></div>
<div class="a" style="left:808px;top:537px;width:39px;height:407px;background:linear-gradient(90deg,#fdfdfd,#f1f1f1);border-bottom:2px solid #b4b4b4;"></div>
<div class="a" style="left:808px;top:1276px;width:39px;height:42px;background:#f8f8f8;border-top:2px solid #b8b8b8;"></div>
<div class="a" style="left:859px;top:813.0px;width:3px;height:3px;background:#b0b0b0;"></div>
<div class="a" style="left:2199px;top:813.0px;width:3px;height:3px;background:#b0b0b0;"></div>
<div class="a" style="left:859px;top:821.8px;width:3px;height:3px;background:#b0b0b0;"></div>
<div class="a" style="left:2199px;top:821.8px;width:3px;height:3px;background:#b0b0b0;"></div>
<div class="a" style="left:859px;top:830.6px;width:3px;height:3px;background:#b0b0b0;"></div>
<div class="a" style="left:2199px;top:830.6px;width:3px;height:3px;background:#b0b0b0;"></div>
<div class="a" style="left:859px;top:839.4px;width:3px;height:3px;background:#b0b0b0;"></div>
<div class="a" style="left:2199px;top:839.4px;width:3px;height:3px;background:#b0b0b0;"></div>
<div class="a" style="left:859px;top:848.2px;width:3px;height:3px;background:#b0b0b0;"></div>
<div class="a" style="left:2199px;top:848.2px;width:3px;height:3px;background:#b0b0b0;"></div>
<div class="a" style="left:859px;top:857.0px;width:3px;height:3px;background:#b0b0b0;"></div>
<div class="a" style="left:2199px;top:857.0px;width:3px;height:3px;background:#b0b0b0;"></div>
<svg style="left:816px;top:506px" width="22" height="12" viewBox="0 0 22 12"><path d="M0 12L11 0L22 12Z" fill="#555"/></svg>
<svg style="left:816px;top:1292px" width="22" height="12" viewBox="0 0 22 12"><path d="M0 0L11 12L22 0Z" fill="#555"/></svg>
<svg style="left:98px;top:513.0px" width="13" height="22" viewBox="0 0 13 22"><path d="M0 0L13 11L0 22Z" fill="#5a5a5a"/></svg><div class="a" style="left:143px;top:503.5px;width:41px;height:41px;background:#fff;border:2px solid #bdbdbd;border-radius:4px;"></div><svg style="left:201px;top:500.0px" width="48" height="48" viewBox="0 0 48 48"><g fill="#fff" stroke="#666" stroke-width="1.6"><circle cx="15" cy="18" r="3.4"/><circle cx="36" cy="7" r="3.4"/><circle cx="9" cy="39" r="3.4"/></g></svg><span class="t" style="left:264.7px;top:504.4px;font-size:42px;letter-spacing:1.12px;font-weight:bold;font-style:italic;color:#8c8c8c;">MHHW surface [m]</span>
<div class="a" style="left:143px;top:558.2px;width:41px;height:41px;background:#fff;border:2px solid #bdbdbd;border-radius:4px;"></div><svg style="left:147px;top:562.7px" width="34" height="32" viewBox="0 0 34 32"><path d="M4 16L12 26L29 3" stroke="#111" stroke-width="5" fill="none"/></svg><div class="a" style="left:201px;top:555.2px;width:47px;height:47px;border:4px solid #ff2a2a;background:#fff;"></div><span class="t" style="left:264.7px;top:559.1px;font-size:42px;letter-spacing:0.84px;font-weight:bold;">aoi_epsg_26917</span>
<svg style="left:94px;top:627.4px" width="22" height="12" viewBox="0 0 22 12"><path d="M0 0L22 0L11 12Z" fill="#5a5a5a"/></svg><div class="a" style="left:143px;top:612.9px;width:41px;height:41px;background:#fff;border:2px solid #bdbdbd;border-radius:4px;"></div><div class="a" style="left:206.0px;top:614.4px;width:12.7px;height:12.7px;background:#2b3a4e;"></div><div class="a" style="left:231.4px;top:614.4px;width:12.7px;height:12.7px;background:#2b3a4e;"></div><div class="a" style="left:206.0px;top:627.1px;width:12.7px;height:12.7px;background:#a9c3e6;"></div><div class="a" style="left:218.7px;top:627.1px;width:12.7px;height:12.7px;background:#2b3a4e;"></div><div class="a" style="left:231.4px;top:627.1px;width:12.7px;height:12.7px;background:#c7d9f0;"></div><div class="a" style="left:206.0px;top:639.8px;width:12.7px;height:12.7px;background:#2b3a4e;"></div><div class="a" style="left:218.7px;top:639.8px;width:12.7px;height:12.7px;background:#a9c3e6;"></div><span class="t" style="left:264.7px;top:613.8px;font-size:42px;letter-spacing:0.19px;font-weight:bold;font-style:italic;color:#8c8c8c;">connect</span>
<span class="t" style="left:199.7px;top:668.5px;font-size:42px;letter-spacing:0.20px;">Band 1 (Gray)</span>
<span class="t" style="left:266.0px;top:723.2px;font-size:42px;">0</span>
<span class="t" style="left:266.0px;top:777.9px;font-size:42px;">1</span><div class="a" style="left:201px;top:774.0px;width:47px;height:47px;background:#000;"></div>
<svg style="left:98px;top:841.2px" width="13" height="22" viewBox="0 0 13 22"><path d="M0 0L13 11L0 22Z" fill="#5a5a5a"/></svg><div class="a" style="left:143px;top:831.7px;width:41px;height:41px;background:#fff;border:2px solid #bdbdbd;border-radius:4px;"></div><div class="a" style="left:206.0px;top:833.2px;width:12.7px;height:12.7px;background:#2b3a4e;"></div><div class="a" style="left:231.4px;top:833.2px;width:12.7px;height:12.7px;background:#2b3a4e;"></div><div class="a" style="left:206.0px;top:845.9px;width:12.7px;height:12.7px;background:#a9c3e6;"></div><div class="a" style="left:218.7px;top:845.9px;width:12.7px;height:12.7px;background:#2b3a4e;"></div><div class="a" style="left:231.4px;top:845.9px;width:12.7px;height:12.7px;background:#c7d9f0;"></div><div class="a" style="left:206.0px;top:858.6px;width:12.7px;height:12.7px;background:#2b3a4e;"></div><div class="a" style="left:218.7px;top:858.6px;width:12.7px;height:12.7px;background:#a9c3e6;"></div><span class="t" style="left:264.7px;top:832.6px;font-size:42px;letter-spacing:0.57px;font-weight:bold;font-style:italic;color:#8c8c8c;">single</span>
<div class="a" style="left:143px;top:886.4px;width:41px;height:41px;background:#fff;border:2px solid #bdbdbd;border-radius:4px;"></div><div class="a" style="left:201px;top:883.4px;width:47px;height:47px;border:2px solid #333;background:#fff;"></div><span class="t" style="left:264.7px;top:887.3px;font-size:42px;letter-spacing:0.72px;font-weight:bold;font-style:italic;color:#8c8c8c;">polygonized</span>
<svg style="left:94px;top:955.6px" width="22" height="12" viewBox="0 0 22 12"><path d="M0 0L22 0L11 12Z" fill="#5a5a5a"/></svg><div class="a" style="left:143px;top:941.1px;width:41px;height:41px;background:#fff;border:2px solid #bdbdbd;border-radius:4px;"></div><div class="a" style="left:206.0px;top:942.6px;width:12.7px;height:12.7px;background:#2b3a4e;"></div><div class="a" style="left:231.4px;top:942.6px;width:12.7px;height:12.7px;background:#2b3a4e;"></div><div class="a" style="left:206.0px;top:955.3px;width:12.7px;height:12.7px;background:#a9c3e6;"></div><div class="a" style="left:218.7px;top:955.3px;width:12.7px;height:12.7px;background:#2b3a4e;"></div><div class="a" style="left:231.4px;top:955.3px;width:12.7px;height:12.7px;background:#c7d9f0;"></div><div class="a" style="left:206.0px;top:968.0px;width:12.7px;height:12.7px;background:#2b3a4e;"></div><div class="a" style="left:218.7px;top:968.0px;width:12.7px;height:12.7px;background:#a9c3e6;"></div><span class="t" style="left:264.7px;top:942.0px;font-size:42px;letter-spacing:1.39px;font-weight:bold;font-style:italic;color:#8c8c8c;">lowlying</span>
<span class="t" style="left:199.7px;top:996.7px;font-size:42px;letter-spacing:0.20px;">Band 1 (Gray)</span>
<span class="t" style="left:266.0px;top:1051.4px;font-size:42px;">0</span>
<span class="t" style="left:266.0px;top:1106.1px;font-size:42px;">1</span><div class="a" style="left:201px;top:1102.2px;width:47px;height:47px;background:#00a600;"></div>
<svg style="left:94px;top:1174.4px" width="22" height="12" viewBox="0 0 22 12"><path d="M0 0L22 0L11 12Z" fill="#5a5a5a"/></svg><div class="a" style="left:143px;top:1159.9px;width:41px;height:41px;background:#fff;border:2px solid #bdbdbd;border-radius:4px;"></div><div class="a" style="left:206.0px;top:1161.4px;width:12.7px;height:12.7px;background:#2b3a4e;"></div><div class="a" style="left:231.4px;top:1161.4px;width:12.7px;height:12.7px;background:#2b3a4e;"></div><div class="a" style="left:206.0px;top:1174.1px;width:12.7px;height:12.7px;background:#a9c3e6;"></div><div class="a" style="left:218.7px;top:1174.1px;width:12.7px;height:12.7px;background:#2b3a4e;"></div><div class="a" style="left:231.4px;top:1174.1px;width:12.7px;height:12.7px;background:#c7d9f0;"></div><div class="a" style="left:206.0px;top:1186.8px;width:12.7px;height:12.7px;background:#2b3a4e;"></div><div class="a" style="left:218.7px;top:1186.8px;width:12.7px;height:12.7px;background:#a9c3e6;"></div><span class="t" style="left:264.7px;top:1160.8px;font-size:42px;letter-spacing:1.47px;font-weight:bold;font-style:italic;color:#8c8c8c;">depth</span>
<span class="t" style="left:199.7px;top:1215.5px;font-size:42px;letter-spacing:0.20px;">Band 1 (Gray)</span>
<div class="a" style="left:201px;top:1262px;width:47px;height:56px;background:linear-gradient(#f7fbff,#c9ddf0);"></div>
<span class="t" style="left:272.0px;top:1265.3px;font-size:42px;">0</span>
<!-- mapsvg -->
<svg style="left:0;top:0" width="3286" height="1480" viewBox="0 0 3286 1480">
<defs>
<clipPath id="mapclip"><rect x="870" y="348.5" width="1319" height="969.5"/></clipPath>
<clipPath id="rasclip"><rect x="860" y="340" width="1038" height="990"/></clipPath>
<filter id="b40" x="-20%" y="-20%" width="140%" height="140%"><feGaussianBlur stdDeviation="28"/></filter>
<filter id="b12" x="-20%" y="-20%" width="140%" height="140%"><feGaussianBlur stdDeviation="9"/></filter>
<filter id="noise" x="0" y="0" width="100%" height="100%"><feTurbulence type="fractalNoise" baseFrequency="0.02 0.035" numOctaves="5" seed="7" result="n"/><feColorMatrix type="matrix" values="0 0 0 0 0.62  0 0 0 0 0.68  0 0 0 0 0.6  1.2 1.2 1.2 0 -1.55"/></filter>
<filter id="mott" x="-10%" y="-10%" width="120%" height="120%"><feGaussianBlur in="SourceAlpha" stdDeviation="18" result="m"/><feTurbulence type="fractalNoise" baseFrequency="0.06 0.06" numOctaves="3" seed="5"/><feColorMatrix type="matrix" values="0 0 0 0 0.13  0 0 0 0 0.2  0 0 0 0 0.15  2.4 2.4 2.4 0 -3.3" result="t"/><feComposite in="t" in2="m" operator="in"/></filter>
<filter id="noise2" x="0" y="0" width="100%" height="100%"><feTurbulence type="fractalNoise" baseFrequency="0.025 0.03" numOctaves="5" seed="23" result="n"/><feColorMatrix type="matrix" values="0 0 0 0 0.02  0 0 0 0 0.12  0 0 0 0 0.1  1.2 1.2 1.2 0 -1.6"/></filter>
</defs>
<rect x="868" y="346" width="1323" height="974" fill="#bababa"/>
<g clip-path="url(#mapclip)">
<rect x="860" y="340" width="1340" height="990" fill="#4a7a70"/>
<g filter="url(#b40)">
<rect x="840" y="320" width="330" height="290" fill="#1e4644"/>
<rect x="840" y="350" width="110" height="250" fill="#7c9888"/>
<ellipse cx="960" cy="520" rx="40" ry="80" fill="#4f766c"/>
<ellipse cx="1030" cy="440" rx="85" ry="115" fill="#061e20"/>
<ellipse cx="1000" cy="365" rx="60" ry="30" fill="#2c5a56"/>
<ellipse cx="1125" cy="400" rx="35" ry="80" fill="#2f5f5a"/>
<ellipse cx="1020" cy="575" rx="140" ry="22" fill="#587c70"/>
<rect x="1740" y="320" width="470" height="410" fill="#3f7a66"/>
<ellipse cx="1850" cy="560" rx="50" ry="40" fill="#3a665c"/>
<ellipse cx="2000" cy="560" rx="80" ry="120" fill="#6a9384"/>
<ellipse cx="2060" cy="640" rx="40" ry="90" fill="#566c56"/>
<ellipse cx="2138" cy="540" rx="22" ry="240" fill="#88896a" transform="rotate(5 2138 540)"/>
<ellipse cx="2180" cy="520" rx="12" ry="260" fill="#2a5c4c"/>
<ellipse cx="2100" cy="440" rx="40" ry="60" fill="#4c877a"/>
<ellipse cx="1830" cy="400" rx="50" ry="50" fill="#2f6a60"/>
<rect x="1900" y="720" width="310" height="620" fill="#526f62"/>
<ellipse cx="2182" cy="1000" rx="10" ry="330" fill="#3a645e"/>
<ellipse cx="1990" cy="820" rx="50" ry="80" fill="#505c4a"/>
<ellipse cx="1980" cy="1100" rx="70" ry="130" fill="#485e52"/>
<ellipse cx="1870" cy="1040" rx="70" ry="60" fill="#8ca89c"/>
<ellipse cx="1840" cy="1150" rx="70" ry="50" fill="#58766a"/>
<rect x="1405" y="1222" width="520" height="120" fill="#1f5250"/>
<ellipse cx="1560" cy="1300" rx="130" ry="30" fill="#0c3638"/>
<ellipse cx="1760" cy="1290" rx="100" ry="30" fill="#4a786e"/>
<ellipse cx="1720" cy="1200" rx="60" ry="40" fill="#4c8278"/>
<rect x="840" y="968" width="195" height="370" fill="#3f7a68"/>
<ellipse cx="878" cy="1185" rx="32" ry="55" fill="#0c3a2e"/>
<polygon points="850,1235 945,1225 1010,1330 850,1330" fill="#8c8868"/>
<ellipse cx="885" cy="1010" rx="18" ry="45" fill="#7f9880"/>
<ellipse cx="985" cy="1130" rx="35" ry="55" fill="#4f8a74"/>
</g>
<g filter="url(#b12)">
<rect x="1150" y="455" width="140" height="270" fill="#4a4428"/>
<ellipse cx="1205" cy="500" rx="55" ry="38" fill="#1f4a38"/>
<ellipse cx="1262" cy="510" rx="25" ry="40" fill="#3c6a58"/>
<ellipse cx="1215" cy="600" rx="50" ry="50" fill="#5c5030"/>
<ellipse cx="1195" cy="675" rx="45" ry="40" fill="#0a0a04"/>
<ellipse cx="1266" cy="640" rx="16" ry="70" fill="#76705a"/>
<rect x="1405" y="320" width="140" height="150" fill="#5e604c"/>
<ellipse cx="1450" cy="360" rx="40" ry="25" fill="#4c4a36"/>
<ellipse cx="1510" cy="420" rx="30" ry="40" fill="#6c6c58"/>
<rect x="2053" y="722" width="122" height="610" fill="#789a90"/>
<ellipse cx="2115" cy="930" rx="32" ry="300" fill="#8cada3"/>
<ellipse cx="2090" cy="800" rx="25" ry="60" fill="#86a89c"/>
<polygon points="1900,340 2070,340 2068,398 2043,400 1991,409 1973,437 1944,444 1907,418 1905,371" fill="#a8a894"/>
<polygon points="1922,340 2057,340 2052,389 1991,402 1960,398 1933,374" fill="#86734f"/>
<path d="M2063 345L2062 396" stroke="#e4e4d6" stroke-width="11"/>
<path d="M1915 385L1948 432L1985 425" stroke="#cfd6cc" stroke-width="10" fill="none"/>
<path d="M1935 365L1960 395M1975 350L1990 385M2010 350L2020 385M2035 345L2040 380M1955 345L1965 370" stroke="#5a4c2c" stroke-width="8" opacity=".6"/>
<path d="M2154 340L2128 600L2108 725" stroke="#80825f" stroke-width="34" fill="none" opacity=".8"/>
<path d="M2184 340L2180 600L2170 720" stroke="#275545" stroke-width="20" fill="none" opacity=".8"/>
<path d="M930 380L1000 560M960 360L1050 540M1090 360L1120 460" stroke="#4a756c" stroke-width="10" opacity=".55"/>
<path d="M1900 520L1990 600M1880 580L1960 660" stroke="#7fa494" stroke-width="10" opacity=".6"/>
<path d="M1960 640L2040 560L2050 620L2010 700L2030 760L1990 800" stroke="#3e5644" stroke-width="14" fill="none" opacity=".6"/>
<path d="M1950 900L2000 960L1960 1040L2010 1100L1980 1180L2020 1250" stroke="#34483c" stroke-width="16" fill="none" opacity=".55"/>
<path d="M1900 1000L1940 1050L1900 1130L1930 1200" stroke="#3c5246" stroke-width="14" fill="none" opacity=".5"/>
</g>
<polygon points="1930,480 2070,500 2065,720 2055,1320 1700,1320 1800,1110 1925,980" filter="url(#mott)" opacity="0.75"/>
<rect x="870" y="348" width="1320" height="971" filter="url(#noise)" opacity="0.2"/>
<rect x="870" y="348" width="1320" height="971" filter="url(#noise2)" opacity="0.35"/>
<g clip-path="url(#rasclip)">
<polygon points="1157.0,320.0 1157.0,463.0 1284.2,463.0 1284.2,718.0 1157.0,718.0 1157.0,590.5 840.0,590.5 840.0,973.0 902.5,973.0 902.5,1054.0 959.0,1100.5 1029.8,1100.5 1029.8,1278.0 1078.0,1348.0 1411.5,1348.0 1411.5,1228.0 1666.0,1228.0 1666.0,1100.5 1793.2,1100.5 1793.2,973.0 1920.5,973.0 1920.5,590.5 1793.2,590.5 1793.2,463.0 1895.0,463.0 1721.0,320.0 1538.8,320.0 1538.8,463.0 1411.5,463.0 1411.5,320.0" fill="#852ddc"/>
<polygon points="860.0,830.0 870.8,838.6 898.8,864.5 929.0,866.6 954.9,894.7 972.1,918.4 993.7,927.0 1032.5,968.0 1049.7,987.4 1079.3,1015.2 1123.3,1056.2 1149.7,1068.0 1167.3,1070.9 1190.7,1065.0 1212.7,1051.8 1225.9,1038.6 1240.6,1018.1 1244.1,997.6 1251.7,997.6 1252.3,1018.1 1262.5,1025.4 1259.6,1035.7 1252.3,1037.2 1237.6,1043.0 1225.9,1053.3 1217.1,1068.0 1217.1,1091.4 1240.6,1081.1 1269.9,1068.0 1299.2,1053.3 1328.5,1038.6 1357.8,1024.0 1387.1,1009.3 1410.6,980.0 1416.2,968.0 1442.0,924.9 1472.2,881.7 1498.1,847.2 1506.7,840.1 1502.4,809.9 1491.6,771.1 1498.1,745.3 1502.4,719.4 1474.4,717.3 1456.3,712.9 1456.4,705.4 1454.7,571.1 1458.0,562.9 1479.3,554.7 1510.4,561.3 1525.2,558.0 1551.4,541.6 1558.0,521.9 1564.5,499.0 1569.4,485.9 1580.9,471.1 1594.0,456.4 1616.9,440.0 1623.5,418.7 1631.7,408.9 1643.1,412.2 1656.3,418.7 1669.4,428.6 1682.5,438.4 1702.1,449.8 1721.8,461.3 1738.2,469.5 1749.6,472.8 1751.3,492.4 1752.9,531.8 1756.2,567.8 1759.5,587.5 1764.4,603.8 1766.0,623.5 1766.0,725.1 1782.0,724.0 1771.5,749.6 1756.0,767.0 1751.0,784.0 1765.0,803.5 1789.0,814.0 1823.0,805.6 1832.0,790.5 1866.0,767.0 1875.0,754.0 1875.0,728.0 1872.5,692.0 1872.5,672.6 1862.7,666.0 1846.0,676.0 1859.0,649.7 1861.0,630.0 1864.0,627.5 1867.6,630.0 1871.0,649.7 1882.0,658.0 1883.0,666.0 1879.0,672.6 1882.0,692.0 1885.6,725.0 1885.7,771.0 1875.0,805.6 1870.6,823.0 1862.0,840.0 1849.0,856.0 1832.0,899.0 1814.5,938.0 1788.7,968.0 1754.0,1002.5 1737.0,1024.0 1707.0,1053.0 1653.0,1087.0 1640.0,1081.0 1612.0,1075.8 1573.0,1097.0 1547.0,1123.0 1530.0,1138.0 1500.0,1161.8 1475.0,1179.0 1445.8,1200.0 1425.0,1211.6 1404.7,1223.0 1372.5,1241.0 1343.0,1258.5 1313.8,1273.0 1290.4,1285.0 1272.8,1299.6 1255.0,1314.0 1249.0,1322.0 1082.0,1322.0 1067.6,1290.8 1064.7,1273.0 1067.6,1232.0 1073.5,1219.0 1085.0,1219.0 1085.0,1205.7 1094.0,1195.5 1097.0,1182.0 1091.0,1161.8 1079.0,1150.0 1050.0,1120.7 1032.5,1099.5 989.3,1054.2 946.2,1011.1 903.1,963.7 870.8,929.2 860.0,918.4" fill="#6dd214"/>
<polygon points="1457.5,1037.2 1387.1,1034.2 1378.3,1048.9 1360.8,1059.2 1343.2,1064.4 1338.8,1055.6 1313.9,1065.0 1284.5,1081.1 1255.2,1094.3 1225.9,1109.0 1208.3,1117.8 1190.7,1132.4 1170.2,1139.8 1173.1,1167.6 1187.8,1182.3 1202.4,1199.9 1220.0,1211.6 1237.6,1211.6 1265.5,1211.6 1278.7,1224.8 1302.1,1223.3 1319.7,1214.5 1331.4,1202.8 1340.2,1182.3 1349.0,1167.6 1372.5,1150.0 1393.0,1141.2 1413.5,1132.4 1410.6,1114.9 1416.5,1097.3 1428.2,1079.7 1442.8,1073.8 1454.6,1062.1" fill="#852ddc"/>
<polygon points="1205.4,1130.1 1210.7,1133.0 1211.2,1155.9 1225.9,1170.6 1243.5,1177.0 1261.1,1194.6 1275.7,1183.8 1284.5,1186.7 1286.0,1193.4 1275.7,1207.2 1265.5,1212.2 1237.6,1212.8 1231.8,1196.9 1214.2,1182.3 1195.1,1158.8 1193.7,1144.2" fill="#6dd214"/>
<polygon points="1578.0,1037.0 1612.0,1034.5 1637.0,1036.0 1681.0,1022.0 1693.0,1013.0 1737.0,1002.0 1709.0,1035.0 1688.0,1058.0 1661.0,1070.0 1648.0,1078.0 1640.0,1074.0 1631.0,1066.0 1606.0,1046.0" fill="#852ddc"/>
<polygon points="1633.3,358.8 1669.4,358.8 1677.5,365.3 1690.7,379.4 1703.8,400.7 1713.6,417.7 1728.3,423.6 1736.5,436.7 1739.8,458.0 1737.5,458.0 1734.2,438.4 1726.7,426.9 1712.0,423.0 1698.8,421.0 1692.3,407.3 1682.5,389.2 1669.4,376.8 1656.3,372.9 1641.5,377.8 1636.6,390.9 1633.3,408.9 1630.7,408.9 1631.0,394.1 1638.2,376.1 1643.8,364.0 1633.3,361.4" fill="#6dd214"/>
<path d="M1400 1034L1457 1036L1580 1038" stroke="#852ddc" stroke-width="3.5" fill="none"/>
<path d="M877 600L1124 840L1162 873L1205 912L1235 942L1246 968L1248 994L1248 1005" stroke="#6dd214" stroke-width="8" fill="none" stroke-linejoin="round"/>
<polygon points="1078,780 1086,776 1100,802 1094,808" fill="#6dd214"/>
<circle cx="1100" cy="1211" r="11" fill="#852ddc"/>
<rect x="1083" y="1205" width="10" height="13" fill="#852ddc"/>
<polygon points="1293,1262 1303,1256 1306,1268 1302,1277 1294,1272" fill="#852ddc"/>
<rect x="1279" y="1236" width="23" height="5" fill="#852ddc"/>
<polyline points="1636.6,404.0 1649.7,404.0 1666.1,415.4 1675.9,426.9" stroke="#6dd214" stroke-width="3" fill="none"/>
<polyline points="1767.7,621.9 1792.2,638.3" stroke="#6dd214" stroke-width="3" fill="none"/>
<polyline points="1798.8,635.0 1808.6,626.1 1816.8,636.6 1821.7,649.7 1823.4,664.5" stroke="#6dd214" stroke-width="3.5" fill="none"/>
<ellipse cx="1371" cy="521" rx="29" ry="21" fill="#1a6fd8" transform="rotate(15 1371 521)"/>
<polygon points="1196,828 1231,826 1240,842 1232,856 1213.6,868.8 1187.7,881 1177,871 1183,851.6" fill="#15e09a"/>
<ellipse cx="1117" cy="782" rx="10" ry="14" fill="#5cdc2a" transform="rotate(35 1117 782)"/>
<ellipse cx="1154" cy="831" rx="8" ry="5" fill="#50e078" transform="rotate(-30 1154 831)"/>
<circle cx="1165" cy="805" r="22" fill="#7e2ed8" opacity=".6"/>
<rect x="1307.5" y="810.5" width="6" height="6" fill="#e0102a"/>
<polygon points="1393.0,1010.8 1420.0,977.1 1425.8,978.5 1431.1,997.6 1445.8,999.1 1460.4,1019.6 1448.7,1018.1 1442.8,1010.8 1425.3,1012.2" fill="#c42a9e"/>
<rect x="1402" y="1018" width="23" height="3" fill="#3a8ad0"/><rect x="1428" y="1018" width="15" height="3" fill="#3020b0"/>
<polygon points="1117.4,1110.5 1176.1,1084.1 1179.0,1094.3 1190.7,1092.9 1179.0,1109.0 1149.7,1123.7 1138.0,1129.5 1126.2,1123.7" fill="#e0307a"/>
<path d="M942 955L1015 1028" stroke="#e8305a" stroke-width="4"/><path d="M1020 1033L1045 1054" stroke="#a070e0" stroke-width="4"/><path d="M1047 1058L1056 1065" stroke="#e8305a" stroke-width="4"/>
<path d="M872 883L894 903" stroke="#40c8e0" stroke-width="3" stroke-dasharray="5 4"/>
<polygon points="1431.1,1103.1 1442.8,1092.9 1454.6,1095.8 1466.3,1111.9 1475.1,1132.4 1472.2,1138.3 1460.4,1126.6 1451.6,1117.8 1442.8,1117.8 1441.4,1126.6 1434.1,1117.8" fill="#9a78e8"/>
<polygon points="1258,1250 1265,1245 1276,1266 1270,1269" fill="#5a6ad8"/>
<rect x="1079" y="1291" width="9" height="16" fill="#60e8d0"/><rect x="1079" y="1283" width="15" height="8" fill="#a8c870"/>
<rect x="1099" y="1300" width="4" height="14" fill="#c8a030"/>
<polygon points="1733.3,495.7 1736.5,495.7 1739.8,528.5 1746.4,554.7 1744.7,574.4 1738.2,572.7 1734.9,541.6 1731.6,508.8" fill="#dca864"/>
<rect x="1705" y="441" width="8" height="12" fill="#e04080"/><rect x="1725" y="450" width="11" height="10" fill="#40d090"/>
<rect x="1787" y="841" width="13" height="16" fill="#e04a18"/><rect x="1819" y="870" width="8" height="6" fill="#d82020"/><rect x="1774" y="953" width="12" height="8" fill="#e87820"/>
<rect x="1534" y="700" width="3" height="8" fill="#e04060"/><rect x="1635" y="675" width="5" height="28" fill="#58d828"/>
<rect x="1490" y="768" width="3.5" height="3.5" fill="#e060c0"/>
<rect x="1496" y="776" width="3.5" height="3.5" fill="#d0d060"/>
<rect x="1502" y="790" width="3.5" height="3.5" fill="#40c0e0"/>
<rect x="1498" y="800" width="3.5" height="3.5" fill="#40c0e0"/>
<rect x="1505" y="806" width="3.5" height="3.5" fill="#4060e0"/>
<rect x="1493" y="812" width="3.5" height="3.5" fill="#e04090"/>
<rect x="1500" y="814" width="3.5" height="3.5" fill="#30c8e8"/>
<rect x="1488" y="825" width="3.5" height="3.5" fill="#c8a030"/>
<rect x="1318" y="476" width="3.5" height="3.5" fill="#40e0d0"/>
<rect x="1326" y="480" width="3.5" height="3.5" fill="#60a0e0"/>
<rect x="1322" y="486" width="3.5" height="3.5" fill="#d0d040"/>
<rect x="1306" y="488" width="3.5" height="3.5" fill="#30c040"/>
<rect x="1318" y="512" width="3.5" height="3.5" fill="#e0c030"/>
<rect x="1332" y="514" width="3.5" height="3.5" fill="#e09040"/>
<rect x="1402" y="503" width="3.5" height="3.5" fill="#40d0e0"/>
<rect x="1390" y="500" width="3.5" height="3.5" fill="#e040a0"/>
<rect x="1403" y="524" width="3.5" height="3.5" fill="#e07030"/>
<rect x="1230" y="388" width="3.5" height="3.5" fill="#40d0a0"/>
<rect x="1234" y="394" width="3.5" height="3.5" fill="#40d0a0"/>
<rect x="1252" y="395" width="3.5" height="3.5" fill="#e09050"/>
<rect x="1245" y="407" width="3.5" height="3.5" fill="#d0c040"/>
<rect x="1247" y="410" width="3.5" height="3.5" fill="#d0c040"/>
<rect x="1615" y="365" width="3.5" height="3.5" fill="#40d0e0"/>
<rect x="1622" y="362" width="3.5" height="3.5" fill="#e0e070"/>
<rect x="1609" y="372" width="3.5" height="3.5" fill="#40d0e0"/>
<rect x="1613" y="382" width="3.5" height="3.5" fill="#e04040"/>
<rect x="1622" y="414" width="3.5" height="3.5" fill="#30d8e8"/>
<rect x="1688" y="424" width="3.5" height="3.5" fill="#e09030"/>
<rect x="1720" y="430" width="3.5" height="3.5" fill="#4080e0"/>
<rect x="1182" y="802" width="3.5" height="3.5" fill="#40a0e0"/>
<rect x="1224" y="866" width="3.5" height="3.5" fill="#e0a070"/>
<rect x="1225" y="876" width="3.5" height="3.5" fill="#6060e0"/>
<rect x="1253" y="900" width="3.5" height="3.5" fill="#e060c0"/>
<rect x="1626" y="1048" width="3.5" height="3.5" fill="#a0e0e0"/>
<rect x="1640" y="1055" width="3.5" height="3.5" fill="#8080e0"/>
<rect x="1624" y="1063" width="3.5" height="3.5" fill="#40a0e0"/>
<rect x="1612" y="1068" width="3.5" height="3.5" fill="#e03030"/>
<rect x="1610" y="1041" width="3.5" height="3.5" fill="#c080e0"/>
<rect x="1780" y="907" width="3.5" height="3.5" fill="#8060e0"/>
<rect x="1792" y="918" width="3.5" height="3.5" fill="#4090e0"/>
<rect x="1796" y="912" width="3.5" height="3.5" fill="#40c0e0"/>
<rect x="1806" y="905" width="3.5" height="3.5" fill="#60d040"/>
<rect x="1800" y="895" width="3.5" height="3.5" fill="#c0d040"/>
<rect x="1808" y="883" width="3.5" height="3.5" fill="#c0d060"/>
<rect x="1745" y="843" width="3.5" height="3.5" fill="#8070e0"/>
<rect x="1790" y="747" width="3.5" height="3.5" fill="#e04070"/>
<rect x="1840" y="745" width="3.5" height="3.5" fill="#40c0e0"/>
<rect x="1793" y="724" width="3.5" height="3.5" fill="#c040c0"/>
<rect x="1276" y="1112" width="3.5" height="3.5" fill="#e09060"/>
<rect x="1239" y="1160" width="3.5" height="3.5" fill="#c080e0"/>
<rect x="1245" y="1163" width="3.5" height="3.5" fill="#4070e0"/>
<rect x="1304" y="1180" width="3.5" height="3.5" fill="#30c0e0"/>
<rect x="1182" y="1167" width="3.5" height="3.5" fill="#e0d040"/>
<rect x="1190" y="1166" width="3.5" height="3.5" fill="#40d0a0"/>
<rect x="1190" y="1170" width="3.5" height="3.5" fill="#40d0a0"/>
<rect x="1256" y="1221" width="3.5" height="3.5" fill="#e060c0"/>
<rect x="1253" y="1230" width="3.5" height="3.5" fill="#e06060"/>
<rect x="1271" y="1218" width="3.5" height="3.5" fill="#40d0c0"/>
<rect x="1279" y="1224" width="3.5" height="3.5" fill="#e040c0"/>
<rect x="1244" y="1064" width="3.5" height="3.5" fill="#50e070"/>
<rect x="1223" y="1087" width="3.5" height="3.5" fill="#50e070"/>
</g>
<polygon points="1157.0,320.0 1157.0,463.0 1284.2,463.0 1284.2,718.0 1157.0,718.0 1157.0,590.5 840.0,590.5 840.0,973.0 902.5,973.0 902.5,1054.0 959.0,1100.5 1029.8,1100.5 1029.8,1278.0 1078.0,1348.0 1411.5,1348.0 1411.5,1228.0 1666.0,1228.0 1666.0,1100.5 1793.2,1100.5 1793.2,973.0 1920.5,973.0 1920.5,590.5 1793.2,590.5 1793.2,463.0 1895.0,463.0 1721.0,320.0 1538.8,320.0 1538.8,463.0 1411.5,463.0 1411.5,320.0" fill="none" stroke="#ff2626" stroke-width="11.5" stroke-linejoin="round"/>
</g></svg>
<!-- identify -->
<span class="t" style="left:2218.7px;top:354.6px;font-size:42px;letter-spacing:1.87px;">Identify Results</span>
<svg style="left:3143px;top:358.5px" width="32" height="32" viewBox="0 0 32 32"><rect x="1.5" y="1.5" width="29" height="29" rx="5" fill="#f4f4f4" stroke="#6a6a6a" stroke-width="2.4"/><rect x="12.5" y="7.5" width="12" height="11" rx="2" fill="none" stroke="#555" stroke-width="2.4"/><rect x="7.5" y="13.5" width="12" height="11" rx="2" fill="#f4f4f4" stroke="#555" stroke-width="2.4"/></svg><svg style="left:3184px;top:358.5px" width="32" height="32" viewBox="0 0 32 32"><rect x="1.5" y="1.5" width="29" height="29" rx="5" fill="#f4f4f4" stroke="#6a6a6a" stroke-width="2.4"/><path d="M8 8L24 24M24 8L8 24" stroke="#3c3c3c" stroke-width="5"/></svg>
<div class="a" style="left:2209px;top:493px;width:1012px;height:627px;background:#fff;border:2px solid #bcbcbc;"></div>
<div class="a" style="left:2211px;top:495px;width:1008px;height:61px;background:linear-gradient(#fdfdfd,#ececec);border-bottom:2px solid #c6c6c6;"></div>
<div class="a" style="left:2896px;top:495px;width:2px;height:59px;background:#c9c9c9;"></div>
<span class="t" style="left:2216.7px;top:507.2px;font-size:42px;letter-spacing:1.74px;">Feature</span>
<span class="t" style="left:2903.7px;top:507.2px;font-size:42px;letter-spacing:2.47px;">Value</span>
<div class="a" style="left:2211px;top:607px;width:1008px;height:50px;background:#308cc6;"></div>
<div class="a" style="left:2211px;top:707px;width:1008px;height:50px;background:#f6f6f6;"></div>
<svg style="left:2219px;top:575px" width="20" height="11" viewBox="0 0 20 11"><path d="M0 0L20 0L10 11Z" fill="#5a5a5a"/></svg>
<svg style="left:2255px;top:626px" width="20" height="11" viewBox="0 0 20 11"><path d="M0 0L20 0L10 11Z" fill="#2b3540"/></svg>
<svg style="left:2294px;top:722px" width="12" height="20" viewBox="0 0 12 20"><path d="M0 0L12 10L0 20Z" fill="#5a5a5a"/></svg>
<span class="t" style="left:2254.7px;top:563.7px;font-size:42px;letter-spacing:1.25px;font-weight:bold;">clumped</span>
<span class="t" style="left:2907.0px;top:563.7px;font-size:42px;">0</span>
<span class="t" style="left:2289.7px;top:612.9px;font-size:42px;letter-spacing:2.41px;color:#fff;">clumped</span>
<span class="t" style="left:2325.7px;top:662.9px;font-size:42px;letter-spacing:0.34px;">Band 1</span>
<span class="t" style="left:2905.7px;top:662.9px;font-size:42px;letter-spacing:3.06px;">538</span>
<span class="t" style="left:2324.7px;top:711.9px;font-size:42px;letter-spacing:1.56px;">(Derived)</span>
<span class="t" style="left:2220.7px;top:1153.9px;font-size:42px;letter-spacing:3.58px;">Mode</span>
<div class="a" style="left:2360px;top:1137px;width:846px;height:71px;background:linear-gradient(#fbfbfb,#ededed);border:2px solid #c0c0c0;border-radius:7px;"></div>
<span class="t" style="left:2371.7px;top:1153.9px;font-size:42px;letter-spacing:1.33px;">Current Layer</span>
<svg style="left:3163px;top:1166px" width="22" height="12" viewBox="0 0 22 12"><path d="M0 0L22 0L11 12Z" fill="#5a5a5a"/></svg>
<span class="t" style="left:2220.7px;top:1247.6px;font-size:42px;letter-spacing:3.51px;">View</span>
<div class="a" style="left:2342px;top:1229px;width:251px;height:71px;background:linear-gradient(#fbfbfb,#ededed);border:2px solid #c0c0c0;border-radius:7px;"></div>
<span class="t" style="left:2352.7px;top:1244.6px;font-size:42px;letter-spacing:2.47px;">Tree</span>
<svg style="left:2549px;top:1257px" width="22" height="12" viewBox="0 0 22 12"><path d="M0 0L22 0L11 12Z" fill="#5a5a5a"/></svg>
<!-- status -->
<div class="a" style="left:85px;top:1331px;width:784px;height:71px;background:#fff;border:2px solid #bdbdbd;border-radius:8px;"></div>
<svg style="left:108px;top:1348px" width="40" height="40" viewBox="0 0 40 40"><circle cx="15" cy="15" r="11" fill="none" stroke="#9a9a9a" stroke-width="3"/><path d="M23 23L35 35" stroke="#9a9a9a" stroke-width="4.5" stroke-linecap="round"/></svg>
<span class="t" style="left:166.7px;top:1348.9px;font-size:42px;letter-spacing:1.23px;color:#9c9c9c;">Type to locate (Ctrl+K)</span>
<span class="t" style="left:892.0px;top:1354.2px;font-size:34px;letter-spacing:1.90px;">Identifyi</span>
<div class="a" style="left:1048px;top:1345px;width:13px;height:50px;overflow:hidden;"><span class="t" style="left:-6px;top:9.2px;font-size:34px">d</span></div>
<div class="a" style="left:1071px;top:1334px;width:330px;height:65px;background:#fff;border:2px solid #bdbdbd;border-radius:8px;"></div>
<span class="t" style="left:1096.0px;top:1354.2px;font-size:34px;letter-spacing:0.76px;">586518, 2849130</span>
<div class="a" style="left:1497px;top:1345px;width:14px;height:50px;overflow:hidden;"><span class="t" style="left:-7px;top:9.2px;font-size:34px">a</span></div>
<div class="a" style="left:1520px;top:1331px;width:284px;height:71px;background:#fff;border:2px solid #bdbdbd;border-radius:8px;"></div>
<div class="a" style="left:1742px;top:1333px;width:2px;height:67px;background:#c6c6c6;"></div>
<div class="a" style="left:1744px;top:1333px;width:58px;height:67px;background:linear-gradient(#fbfbfb,#ededed);border-radius:0 6px 6px 0;"></div>
<span class="t" style="left:1532.0px;top:1354.2px;font-size:34px;letter-spacing:0.35px;">1:33191</span>
<svg style="left:1760px;top:1361px" width="22" height="12" viewBox="0 0 22 12"><path d="M0 0L22 0L11 12Z" fill="#5a5a5a"/></svg>
<svg style="left:1412px;top:1340px" width="48" height="50" viewBox="0 0 48 50"><g transform="rotate(-35 24 25)"><rect x="11" y="4" width="26" height="42" rx="12" fill="#6e6e6e" stroke="#2e2e2e" stroke-width="3"/><path d="M11 20H37M24 4V20" stroke="#1e1e1e" stroke-width="3"/><rect x="14" y="8" width="7" height="9" fill="#e8e8e8"/><circle cx="25" cy="33" r="8.5" fill="#f4f4f4"/><circle cx="26" cy="33" r="3" fill="#444"/></g><path d="M40 8L44 3" stroke="#777" stroke-width="3"/></svg>
<svg style="left:1837px;top:1343px" width="40" height="48" viewBox="0 0 40 48"><path d="M9 22V14a11 11 0 0 1 22 0V22" fill="none" stroke="#9a9a9a" stroke-width="4.5"/><rect x="2" y="21" width="36" height="25" rx="5" fill="#6a6a6a"/></svg>
<div class="a" style="left:1899px;top:1345px;width:14px;height:50px;overflow:hidden;"><span class="t" style="left:0px;top:9.2px;font-size:34px">r</span></div>
<div class="a" style="left:1922px;top:1334px;width:275px;height:68px;background:#fff;border:2px solid #bdbdbd;border-radius:8px;"></div>
<div class="a" style="left:2153px;top:1336px;width:2px;height:64px;background:#c6c6c6;"></div>
<div class="a" style="left:2155px;top:1336px;width:40px;height:64px;background:linear-gradient(#fbfbfb,#ededed);border-radius:0 6px 6px 0;"></div>
<span class="t" style="left:1936.0px;top:1354.2px;font-size:34px;letter-spacing:0.95px;">100%</span>
<svg style="left:2164px;top:1350px" width="20" height="11" viewBox="0 0 20 11"><path d="M0 11L10 0L20 11Z" fill="#5a5a5a"/></svg><svg style="left:2164px;top:1376px" width="20" height="11" viewBox="0 0 20 11"><path d="M0 0L20 0L10 11Z" fill="#5a5a5a"/></svg>
<div class="a" style="left:2221px;top:1345px;width:13px;height:50px;overflow:hidden;"><span class="t" style="left:-8px;top:9.2px;font-size:34px">a</span></div>
<div class="a" style="left:2263px;top:1334px;width:274px;height:65px;background:#fff;border:2px solid #bdbdbd;border-radius:8px;"></div>
<div class="a" style="left:2494px;top:1336px;width:2px;height:61px;background:#c6c6c6;"></div>
<div class="a" style="left:2496px;top:1336px;width:39px;height:61px;background:linear-gradient(#fbfbfb,#ededed);border-radius:0 6px 6px 0;"></div>
<span class="t" style="left:2275.0px;top:1354.2px;font-size:34px;letter-spacing:-0.03px;">0.0 °</span>
<svg style="left:2505px;top:1350px" width="20" height="11" viewBox="0 0 20 11"><path d="M0 11L10 0L20 11Z" fill="#5a5a5a"/></svg><svg style="left:2505px;top:1376px" width="20" height="11" viewBox="0 0 20 11"><path d="M0 0L20 0L10 11Z" fill="#5a5a5a"/></svg>
<div class="a" style="left:2556px;top:1345px;width:41px;height:41px;background:#fff;border:2px solid #bdbdbd;border-radius:4px;"></div>
<svg style="left:2560px;top:1349px" width="34" height="32" viewBox="0 0 34 32"><path d="M4 16L12 26L29 3" stroke="#111" stroke-width="5" fill="none"/></svg>
<span class="t" style="left:2610.0px;top:1352.7px;font-size:34px;letter-spacing:1.22px;">Render</span>
<svg style="left:2774px;top:1346px" width="44" height="42" viewBox="0 0 44 42"><g fill="none" stroke="#7a7a7a" stroke-width="2.2"><ellipse cx="22" cy="21" rx="19" ry="18"/><ellipse cx="22" cy="21" rx="8" ry="18"/><path d="M3 21H41M22 3V39M6 11H38M6 31H38"/></g><path d="M0 20L22 13L44 20" fill="none" stroke="#7a7a7a" stroke-width="3"/></svg>
<span class="t" style="left:2824.0px;top:1354.4px;font-size:34px;letter-spacing:-0.61px;">EPSG:26917</span>
<svg style="left:3086px;top:1346px" width="50" height="48" viewBox="0 0 50 48"><path d="M25 2C11 2 2 10 2 20C2 30 11 37 24 37C27 37 30 36.6 32 36L44 45L41 33C46 30 48 25 48 20C48 10 39 2 25 2Z" fill="#5a5a5a"/><g fill="#fff"><circle cx="14" cy="20" r="3.5"/><circle cx="25" cy="20" r="3.5"/><circle cx="36" cy="20" r="3.5"/></g></svg>
<svg style="left:3186px;top:1376px" width="32" height="32"><rect x="0" y="27" width="3" height="3" fill="#b0b0b0"/><rect x="9" y="18" width="3" height="3" fill="#b0b0b0"/><rect x="9" y="27" width="3" height="3" fill="#b0b0b0"/><rect x="18" y="9" width="3" height="3" fill="#b0b0b0"/><rect x="18" y="18" width="3" height="3" fill="#b0b0b0"/><rect x="18" y="27" width="3" height="3" fill="#b0b0b0"/><rect x="27" y="0" width="3" height="3" fill="#b0b0b0"/><rect x="27" y="9" width="3" height="3" fill="#b0b0b0"/><rect x="27" y="18" width="3" height="3" fill="#b0b0b0"/><rect x="27" y="27" width="3" height="3" fill="#b0b0b0"/></svg>
</div></body></html>
